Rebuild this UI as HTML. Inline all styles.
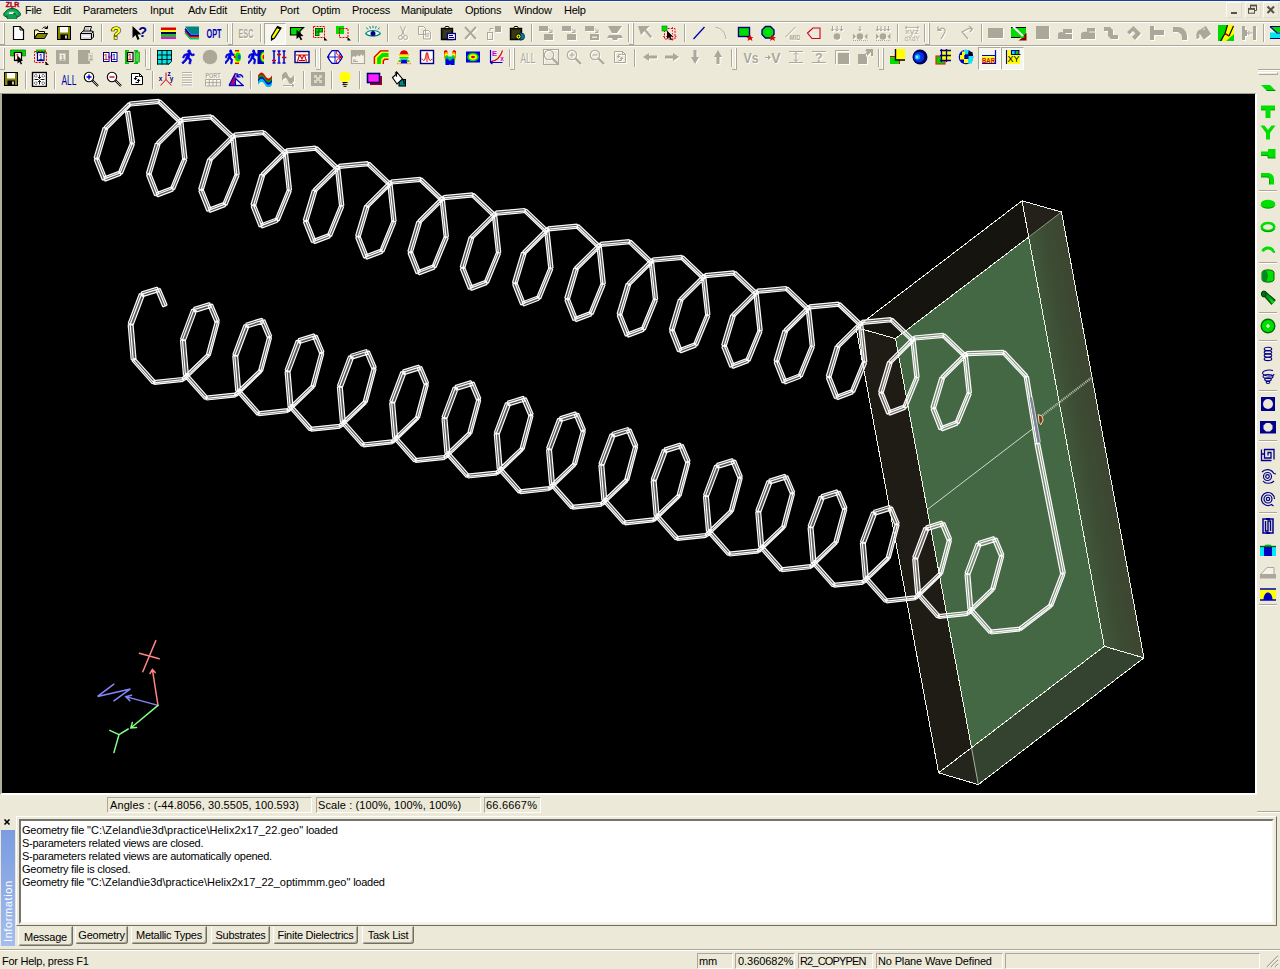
<!DOCTYPE html>
<html><head><meta charset="utf-8"><title>IE3D</title><style>
*{box-sizing:border-box;margin:0;padding:0}
html,body{width:1280px;height:969px;overflow:hidden;background:#ece9d8}
body{position:relative;font-family:"Liberation Sans",sans-serif;font-size:11px;color:#000}
.abs{position:absolute}
.topline{position:absolute;left:0;top:0;width:1280px;height:2px;background:#f7f6ee;border-top:1px solid #1d3f9a}
.mi{position:absolute;top:3px;height:14px;line-height:14px;font-size:11px;letter-spacing:-0.25px;white-space:nowrap}
.wb{position:absolute;top:2px;width:16px;height:16px;border:1px solid;border-color:#fbfaf3 #dedbca #dedbca #fbfaf3;background:#edeadb}
.wb svg{display:block;margin:-1px 0 0 -1px}
.ic{position:absolute;width:16px;height:16px;display:block}
.ic svg{display:block}
.sep{position:absolute;width:2px;height:18px;border-left:1px solid #aca899;border-right:1px solid #fff}
.hsep{position:absolute;width:18px;height:2px;border-top:1px solid #aca899;border-bottom:1px solid #fff}
.grip{position:absolute;width:2px;height:22px;border-left:1px solid #fff;border-right:1px solid #aca899}
.grip:after{content:"";position:absolute;left:-4px;top:21px;width:5px;height:1px;background:#aca899}
.pressed{position:absolute;border:1px solid;border-color:#aca899 #fff #fff #aca899;background:#f6f5ee}
.hl{position:absolute;left:0;width:1280px;height:2px;border-top:1px solid #aca899;border-bottom:1px solid #fff}
.vpwrap{position:absolute;left:0;top:93px;width:1257px;height:702px;border:2px solid;border-top-width:1px;border-color:#a5a292 #fff #fff #b2af9f;background:#000}
.vp{position:absolute;left:0;top:0;display:block}
.fld{position:absolute;top:797px;height:16px;line-height:14px;border:1px solid;border-color:#aca899 #fff #fff #aca899;padding-left:3px;white-space:nowrap;font-size:11px;letter-spacing:-0.1px}
.msgf{position:absolute;left:16px;top:816px;width:1261px;height:110px;border:1px solid;border-color:#fff #716f64 #716f64 #fff}
.msg{position:absolute;left:19px;top:819px;width:1255px;height:105px;border:2px solid;border-color:#77756a #f6f5ec #f6f5ec #77756a;background:#fff}
.msg div{position:absolute;left:1px;height:13px;line-height:13px;white-space:nowrap;font-size:11px;letter-spacing:-0.25px}
.msg div b{font-weight:normal;letter-spacing:0.1px}
.msg div i{font-style:normal;letter-spacing:0}
.info{position:absolute;left:1px;top:830px;width:14px;height:116px;background:linear-gradient(#7b9ce0,#a5bdee)}
.info span{position:absolute;left:0;top:116px;width:116px;height:14px;line-height:14px;transform-origin:0 0;transform:rotate(-90deg);color:#fff;font-size:11px;letter-spacing:0.6px;padding-left:4px}
.tab{position:absolute;top:926px;height:18px;line-height:16px;border:1px solid;border-color:transparent #716f64 #716f64 #fff;border-radius:0 0 3px 3px;text-align:center;font-size:11px;letter-spacing:-0.25px;white-space:nowrap;box-shadow:inset -1px -1px 0 #aca899}
.tab.sel{top:926px;height:20px;border-color:transparent #716f64 #716f64 #fff;line-height:20px;box-shadow:inset -1px -1px 0 #aca899;background:#ece9d8}
.sb{position:absolute;top:953px;height:16px;line-height:15px;border:1px solid;border-color:#aca899 #fff #fff #aca899;padding-left:1px;white-space:nowrap;font-size:11px;letter-spacing:-0.15px}
.sbt{position:absolute;left:2px;top:954px;line-height:14px;font-size:11px;letter-spacing:-0.25px}
</style></head><body>
<div class="topline"></div>
<span class="ic" style="left:3px;top:1px;width:18px;height:19px"><svg width="18" height="18" viewBox="0 0 18 18"><text x="9.5" y="6.2" font-size="7.5" fill="#b00018" font-family="Liberation Sans, sans-serif" font-weight="bold" text-anchor="middle" textLength="13.5" lengthAdjust="spacingAndGlyphs" stroke="#b00018" stroke-width=".4">ZLR</text><path d="M9 6v3" stroke="#7a2030" stroke-width="1.300"/><path d="M.8 12.500l3-3.300 3.500-1.700h4l3.500 1.700 2.700 3.300-.3 2-2.200 1.300-1-1 .2 2.200-1.500 1.400h-7.400l-1.500-1.400 .2-2.200-1 1-2.200-1.300z" fill="#10a050" stroke="#064a26" stroke-width=".9"/><path d="M4 13.500c0-4 10-4 10 0" fill="none" stroke="#30c070" stroke-width="1.200"/><path d="M6.300 11.300h4.500l.7 1.700h-5.900z" fill="#fff"/><path d="M10.300 12.300l2.200 1.200" stroke="#064a26" stroke-width="1.200"/></svg></span>
<span class="mi" style="left:25px">File</span><span class="mi" style="left:53px">Edit</span><span class="mi" style="left:83px">Parameters</span><span class="mi" style="left:150px">Input</span><span class="mi" style="left:188px">Adv Edit</span><span class="mi" style="left:240px">Entity</span><span class="mi" style="left:280px">Port</span><span class="mi" style="left:312px">Optim</span><span class="mi" style="left:352px">Process</span><span class="mi" style="left:401px">Manipulate</span><span class="mi" style="left:465px">Options</span><span class="mi" style="left:514px">Window</span><span class="mi" style="left:564px">Help</span>
<span class="wb" style="left:1226px"><svg width="16" height="16" viewBox="0 0 16 16"><rect x="5" y="10" width="6" height="2" fill="#55524a"/></svg></span>
<span class="wb" style="left:1245px"><svg width="16" height="16" viewBox="0 0 16 16"><path d="M5.500 4v4.500h1.500M11.500 4v4.500h-1.500" fill="none" stroke="#55524a"/><path d="M5 3.500h7" stroke="#55524a" stroke-width="1.800"/><rect x="3.500" y="7" width="6" height="4.200" fill="#edeadb" stroke="#55524a"/><path d="M3 6.800h7" stroke="#55524a" stroke-width="1.800"/></svg></span>
<span class="wb" style="left:1263px"><svg width="16" height="16" viewBox="0 0 16 16"><path d="M4.500 4.500l6.500 6.500M11 4.500l-6.500 6.500" stroke="#55524a" stroke-width="2"/></svg></span>
<div class="hl" style="top:21px"></div>
<div class="hl" style="top:45px"></div>
<span class="grip" style="left:3px;top:23px"></span>
<span class="ic" style="left:10px;top:25px"><svg width="16" height="16" viewBox="0 0 16 16"><path d="M3.500 1.500h6.500l3.500 3.500v9.500h-10z" fill="#fff" stroke="#000" stroke-width="1.200"/><path d="M10 1.500v3.500h3.500" fill="none" stroke="#000"/></svg></span>
<span class="ic" style="left:33px;top:25px"><svg width="16" height="16" viewBox="0 0 16 16"><path d="M1.500 13.500v-8.500h3.500l1 1.500h5.500v2.500h-7.500z" fill="#ffff9c" stroke="#000"/><path d="M1.500 13.500l3-5h10l-3 5z" fill="#848400" stroke="#000"/><path d="M9.500 3.500c1.500-2 3.500-2 4.500-.5M14.500 .8v2.700h-2.700" fill="none" stroke="#000"/></svg></span>
<span class="ic" style="left:56px;top:25px"><svg width="16" height="16" viewBox="0 0 16 16"><rect x="1.500" y="1.500" width="13" height="13" fill="#848400" stroke="#000"/><rect x="4" y="2" width="8" height="5.500" fill="#fff"/><rect x="4.500" y="9.500" width="7.500" height="5" fill="#000"/><rect x="9" y="10.500" width="2" height="3" fill="#c6c6c6"/></svg></span>
<span class="ic" style="left:79px;top:25px"><svg width="16" height="16" viewBox="0 0 16 16"><path d="M4.500 6.500l1.500-5h6.500l-1.500 5z" fill="#fff" stroke="#000"/><path d="M1.500 8.500l2.500-2.500h9.500l1 2.500v3.500l-2.500 2.500h-10.500z" fill="#d8d8d8" stroke="#000"/><path d="M1.500 8.500h11v6M12.500 8.500l2-2" fill="none" stroke="#000"/><path d="M6.500 3h4M6 4.800h4" stroke="#808080" stroke-width="0.8"/><rect x="3" y="10.500" width="8" height="1.500" fill="#fff"/></svg></span>
<span class="sep" style="left:101px;top:24px"></span>
<span class="ic" style="left:108px;top:25px"><svg width="16" height="16" viewBox="0 0 16 16"><text x="8" y="14" font-size="17" fill="#ffff00" font-family="Liberation Sans, sans-serif" font-weight="bold" text-anchor="middle" stroke="#000" stroke-width="1.1" paint-order="stroke">?</text></svg></span>
<span class="ic" style="left:131px;top:25px"><svg width="16" height="16" viewBox="0 0 16 16"><path d="M1.500 1v12l3-3 2 5 2-1-2-4.500h4z" fill="#000"/><text x="11.8" y="12" font-size="14.5" fill="#000090" font-family="Liberation Sans, sans-serif" font-weight="bold" text-anchor="middle">?</text></svg></span>
<span class="sep" style="left:153px;top:24px"></span>
<span class="ic" style="left:160px;top:25px"><svg width="16" height="16" viewBox="0 0 16 16"><rect x="1" y="2.500" width="15" height="2.500" fill="#e00000"/><rect x="1" y="5" width="15" height="2" fill="#ffff00"/><rect x="1" y="7" width="15" height="2.500" fill="#000060"/><rect x="1" y="9.500" width="15" height="2.500" fill="#00d000"/><rect x="1" y="12" width="15" height="2" fill="#ff00ff"/></svg></span>
<span class="ic" style="left:183px;top:25px"><svg width="16" height="16" viewBox="0 0 16 16"><path d="M1.500 8.500l5.500 6h9v-2h-8l-5.500-6z" fill="#00d060"/><path d="M1.500 6.500l5.500 6h9v-1.500h-8l-5.500-6z" fill="#e00000"/><path d="M1.500 4.500l5.500 6.500h9v-1.500h-8l-5.500-6.500z" fill="#0000d0"/><path d="M2 1.500h14v8h-8z" fill="#008484"/></svg></span>
<span class="ic" style="left:206px;top:25px"><svg width="16" height="16" viewBox="0 0 16 16"><text x="8" y="13" font-size="12.5" fill="#0000c0" font-family="Liberation Sans, sans-serif" font-weight="bold" text-anchor="middle" textLength="15" lengthAdjust="spacingAndGlyphs">OPT</text></svg></span>
<span class="sep" style="left:227px;top:24px"></span>
<span class="grip" style="left:231px;top:23px"></span>
<span class="ic" style="left:238px;top:25px"><svg width="16" height="16" viewBox="0 0 16 16"><g color="#fff" transform="translate(1 1)"><text x="8" y="13" font-size="12.5" fill="currentColor" font-family="Liberation Sans, sans-serif" font-weight="bold" text-anchor="middle" textLength="15" lengthAdjust="spacingAndGlyphs">ESC</text></g><g color="#aca899"><text x="8" y="13" font-size="12.5" fill="currentColor" font-family="Liberation Sans, sans-serif" font-weight="bold" text-anchor="middle" textLength="15" lengthAdjust="spacingAndGlyphs">ESC</text></g></svg></span>
<span class="sep" style="left:260px;top:24px"></span>
<span class="pressed" style="left:264px;top:23px;width:22px;height:22px"></span>
<span class="ic" style="left:267px;top:25px"><svg width="16" height="16" viewBox="0 0 16 16"><path d="M10.500 1.500l3.500 1.500-6.500 10-3 2 0-3.500z" fill="#ffff00" stroke="#000" stroke-width="1.200"/><path d="M4.500 15l0-2.500 2.200 1z" fill="#000"/><path d="M10.500 1.500l3.500 1.500-1 1.500-3.500-1.500z" fill="#000"/></svg></span>
<span class="ic" style="left:289px;top:25px"><svg width="16" height="16" viewBox="0 0 16 16"><path d="M1.500 2.500h13l-3.500 3.500v4h-9.500z" fill="#00e000" stroke="#000" stroke-width="1.200"/><path d="M7.500 4.500l7 6.500-3 .2 1.800 3.300-1.600 .8-1.700-3.400-2.500 2.100z" fill="#000"/></svg></span>
<span class="ic" style="left:312px;top:25px"><svg width="16" height="16" viewBox="0 0 16 16"><rect x="1.500" y="1.500" width="11" height="11" fill="none" stroke="#e00000" stroke-dasharray="2 1"/><rect x="3.500" y="3.500" width="7" height="7" fill="#00d800" stroke="#006000"/><path d="M3.500 7h7M7 3.500v7" stroke="#006000"/><rect x="7.500" y="7.500" width="3.500" height="3.500" fill="#ece9d8"/><path d="M12 12v3.500h3.500z" fill="#000"/></svg></span>
<span class="ic" style="left:335px;top:25px"><svg width="16" height="16" viewBox="0 0 16 16"><rect x="1" y="1" width="8" height="8" fill="#00e000"/><rect x="4.500" y="3.500" width="8.500" height="9" fill="none" stroke="#e00000" stroke-dasharray="2 1"/><path d="M12.500 12v3.500h3.500z" fill="#000"/></svg></span>
<span class="sep" style="left:358px;top:24px"></span>
<span class="ic" style="left:365px;top:25px"><svg width="16" height="16" viewBox="0 0 16 16"><path d="M.5 8.500c3.500-4 11.500-4 15 0c-3.500 3.500-11.500 3.500-15 0z" fill="#fff" stroke="#008484" stroke-width="1.100"/><circle cx="8" cy="8.500" r="2.500" fill="#000084"/><path d="M3 4.500l-1.500-2M5.500 3.500l-.7-2.300M8 3.200v-2.400M10.500 3.500l.7-2.300M13 4.500l1.500-2" stroke="#008484"/></svg></span>
<span class="sep" style="left:387px;top:24px"></span>
<span class="ic" style="left:395px;top:25px"><svg width="16" height="16" viewBox="0 0 16 16"><g color="#fff" transform="translate(1 1)"><path d="M5.500 1.500l4 9M10.500 1.500l-4 9" stroke="currentColor" fill="none"/><circle cx="5.500" cy="12.500" r="2" fill="none" stroke="currentColor"/><circle cx="10.500" cy="12.500" r="2" fill="none" stroke="currentColor"/></g><g color="#aca899"><path d="M5.500 1.500l4 9M10.500 1.500l-4 9" stroke="currentColor" fill="none"/><circle cx="5.500" cy="12.500" r="2" fill="none" stroke="currentColor"/><circle cx="10.500" cy="12.500" r="2" fill="none" stroke="currentColor"/></g></svg></span>
<span class="ic" style="left:417px;top:25px"><svg width="16" height="16" viewBox="0 0 16 16"><g color="#fff" transform="translate(1 1)"><path d="M1.500 1.500h5l2 2v6h-7zM6.500 5.500h5l2 2v6.500h-7z" fill="none" stroke="currentColor"/><path d="M8 9h4M8 11h4" stroke="currentColor"/></g><g color="#aca899"><path d="M1.500 1.500h5l2 2v6h-7zM6.500 5.500h5l2 2v6.500h-7z" fill="none" stroke="currentColor"/><path d="M8 9h4M8 11h4" stroke="currentColor"/></g></svg></span>
<span class="ic" style="left:440px;top:25px"><svg width="16" height="16" viewBox="0 0 16 16"><path d="M1.500 3.500h11v11h-11z" fill="#5a5a20" stroke="#000" stroke-width="1.400"/><path d="M2.500 4.500h9v9h-9z" fill="#000" /><path d="M3 5h8v8h-8z" fill="#8a8a3a" fill-opacity=".4"/><path d="M4.500 3.500l1-2h3l1 2z" fill="#ffff9c" stroke="#000"/><rect x="7.500" y="8.500" width="8" height="6" fill="#fff" stroke="#000084" stroke-width="1.300"/><path d="M9 10.500h4M9 12.500h5" stroke="#000084"/></svg></span>
<span class="ic" style="left:463px;top:25px"><svg width="16" height="16" viewBox="0 0 16 16"><g color="#fff" transform="translate(1 1)"><path d="M2 2l11 12M13 2l-11 12" stroke="currentColor" stroke-width="2" fill="none"/></g><g color="#aca899"><path d="M2 2l11 12M13 2l-11 12" stroke="currentColor" stroke-width="2" fill="none"/></g></svg></span>
<span class="ic" style="left:486px;top:25px"><svg width="16" height="16" viewBox="0 0 16 16"><g color="#fff" transform="translate(1 1)"><rect x="1.500" y="7.500" width="5" height="7" fill="none" stroke="currentColor"/><rect x="9" y="1" width="6" height="6" fill="currentColor"/><path d="M4 6v-2.500h3.500" stroke="currentColor" fill="none"/></g><g color="#aca899"><rect x="1.500" y="7.500" width="5" height="7" fill="none" stroke="currentColor"/><rect x="9" y="1" width="6" height="6" fill="currentColor"/><path d="M4 6v-2.500h3.500" stroke="currentColor" fill="none"/></g></svg></span>
<span class="ic" style="left:509px;top:25px"><svg width="16" height="16" viewBox="0 0 16 16"><path d="M1.500 3.500h11v11h-11z" fill="#5a5a20" stroke="#000" stroke-width="1.400"/><path d="M2.500 4.500h9v9h-9z" fill="#000" /><path d="M3 5h8v8h-8z" fill="#8a8a3a" fill-opacity=".4"/><path d="M4.500 3.500l1-2h3l1 2z" fill="#ffff9c" stroke="#000"/><circle cx="12" cy="11.500" r="3.500" fill="#0084a8" stroke="#003060"/><circle cx="9.500" cy="11.500" r="2.600" fill="#ffff00" stroke="#000"/><circle cx="9.500" cy="11.500" r=".9" fill="#000"/></svg></span>
<span class="sep" style="left:531px;top:24px"></span>
<span class="ic" style="left:538px;top:25px"><svg width="16" height="16" viewBox="0 0 16 16"><g color="#fff" transform="translate(1 1)"><rect x="1" y="1" width="9" height="5" fill="currentColor"/><rect x="6" y="9" width="9" height="6" fill="currentColor"/><path d="M10.500 3.500l3.500 4M14 4.500v3h-3" stroke="currentColor" fill="none"/></g><g color="#aca899"><rect x="1" y="1" width="9" height="5" fill="currentColor"/><rect x="6" y="9" width="9" height="6" fill="currentColor"/><path d="M10.500 3.500l3.500 4M14 4.500v3h-3" stroke="currentColor" fill="none"/></g></svg></span>
<span class="ic" style="left:561px;top:25px"><svg width="16" height="16" viewBox="0 0 16 16"><g color="#fff" transform="translate(1 1)"><rect x="1" y="1" width="9" height="5" fill="currentColor"/><rect x="6" y="9" width="9" height="6" fill="currentColor"/><path d="M10.500 3.500l3.500 4M14 4.500v3h-3" stroke="currentColor" fill="none"/></g><g color="#aca899"><rect x="1" y="1" width="9" height="5" fill="currentColor"/><rect x="6" y="9" width="9" height="6" fill="currentColor"/><path d="M10.500 3.500l3.500 4M14 4.500v3h-3" stroke="currentColor" fill="none"/></g></svg></span>
<span class="ic" style="left:584px;top:25px"><svg width="16" height="16" viewBox="0 0 16 16"><g color="#fff" transform="translate(1 1)"><rect x="1" y="1" width="9" height="5" fill="currentColor"/><rect x="6" y="9" width="9" height="6" fill="currentColor"/><path d="M10.500 3.500l3.500 4M14 4.500v3h-3" stroke="currentColor" fill="none"/><rect x="8" y="11.500" width="5" height="1.500" fill="#ece9d8"/></g><g color="#aca899"><rect x="1" y="1" width="9" height="5" fill="currentColor"/><rect x="6" y="9" width="9" height="6" fill="currentColor"/><path d="M10.500 3.500l3.500 4M14 4.500v3h-3" stroke="currentColor" fill="none"/><rect x="8" y="11.500" width="5" height="1.500" fill="#ece9d8"/></g></svg></span>
<span class="ic" style="left:607px;top:25px"><svg width="16" height="16" viewBox="0 0 16 16"><g color="#fff" transform="translate(1 1)"><path d="M1 1h14l-5 7h-5zM2 10h12l2 3h-5l-1 2h-4l-1-2h-5z" fill="currentColor"/></g><g color="#aca899"><path d="M1 1h14l-5 7h-5zM2 10h12l2 3h-5l-1 2h-4l-1-2h-5z" fill="currentColor"/></g></svg></span>
<span class="sep" style="left:628px;top:24px"></span>
<span class="grip" style="left:632px;top:23px"></span>
<span class="ic" style="left:637px;top:25px"><svg width="16" height="16" viewBox="0 0 16 16"><g color="#fff" transform="translate(1 1)"><path d="M1 1h12l-4 3.500 6 7-1.500 1.500-6-7-3.500 4z" fill="currentColor"/></g><g color="#aca899"><path d="M1 1h12l-4 3.500 6 7-1.500 1.500-6-7-3.500 4z" fill="currentColor"/></g></svg></span>
<span class="ic" style="left:661px;top:25px"><svg width="16" height="16" viewBox="0 0 16 16"><rect x="3.500" y="3.500" width="10.500" height="10.500" fill="#fbe4dc" stroke="#e00000" stroke-dasharray="2 1.200"/><path d="M11.500 2v13.500M2 11.500h13.500" stroke="#e00000" stroke-dasharray="1.500 1.500" stroke-width=".8"/><rect x="1" y="1" width="5" height="5" fill="#00e000" stroke="#008000" stroke-width=".6"/><path d="M6 5.500l6 6-2.500 .2 1.500 3-1.300 .6-1.500-3-2.200 1.800z" fill="#000"/></svg></span>
<span class="sep" style="left:684px;top:24px"></span>
<span class="ic" style="left:691px;top:25px"><svg width="16" height="16" viewBox="0 0 16 16"><path d="M2.500 14l11-12" stroke="#0000b0" stroke-width="1.300"/></svg></span>
<span class="ic" style="left:713px;top:25px"><svg width="16" height="16" viewBox="0 0 16 16"><g color="#fff" transform="translate(1 1)"><path d="M2.500 2.500c6 .5 10 5 10.500 11.500" stroke="currentColor" fill="none"/></g><g color="#aca899"><path d="M2.500 2.500c6 .5 10 5 10.500 11.500" stroke="currentColor" fill="none"/></g></svg></span>
<span class="ic" style="left:737px;top:25px"><svg width="16" height="16" viewBox="0 0 16 16"><rect x="1.500" y="2.500" width="11" height="9" fill="#00e000" stroke="#000084" stroke-width="1.400"/><path d="M13 9.5l1.200 2.400h2.300l-1.800 1.700 .7 2.400-2.400-1.500-2.400 1.500 .7-2.400-1.800-1.700h2.300z" fill="#e00000"/></svg></span>
<span class="ic" style="left:760px;top:25px"><svg width="16" height="16" viewBox="0 0 16 16"><path d="M5.500 1.500h5l3.500 3.500v4.500l-3.500 3.500h-5l-3.500-3.500v-4.500z" fill="#00e000" stroke="#000084" stroke-width="1.400"/><path d="M12.5 9.5l1.200 2.400h2.300l-1.800 1.700 .7 2.400-2.400-1.500-2.400 1.500 .7-2.400-1.800-1.700h2.300z" fill="#e00000"/></svg></span>
<span class="ic" style="left:784px;top:25px"><svg width="16" height="16" viewBox="0 0 16 16"><g color="#fff" transform="translate(1 1)"><path d="M1.500 12l10-10" stroke="currentColor"/><text x="11" y="15" font-size="7" fill="currentColor" font-family="Liberation Sans, sans-serif" text-anchor="middle" font-weight="bold" textLength="11" lengthAdjust="spacingAndGlyphs">MID</text></g><g color="#aca899"><path d="M1.500 12l10-10" stroke="currentColor"/><text x="11" y="15" font-size="7" fill="currentColor" font-family="Liberation Sans, sans-serif" text-anchor="middle" font-weight="bold" textLength="11" lengthAdjust="spacingAndGlyphs">MID</text></g></svg></span>
<span class="ic" style="left:806px;top:25px"><svg width="16" height="16" viewBox="0 0 16 16"><path d="M1.500 8l5.500-5h7v10.500h-8z" fill="none" stroke="#d00020" stroke-width="1.100"/></svg></span>
<span class="ic" style="left:829px;top:25px"><svg width="16" height="16" viewBox="0 0 16 16"><g color="#fff" transform="translate(1 1)"><path d="M3.5 1v5M3.5 6l-1.500-2M3.5 6l1.500-2" stroke="currentColor" fill="none"/><path d="M8 1v5M8 6l-1.500-2M8 6l1.500-2" stroke="currentColor" fill="none"/><path d="M12.5 1v5M12.5 6l-1.500-2M12.5 6l1.500-2" stroke="currentColor" fill="none"/><circle cx="8" cy="11.500" r="3.300" fill="currentColor"/></g><g color="#aca899"><path d="M3.5 1v5M3.5 6l-1.500-2M3.5 6l1.500-2" stroke="currentColor" fill="none"/><path d="M8 1v5M8 6l-1.500-2M8 6l1.500-2" stroke="currentColor" fill="none"/><path d="M12.5 1v5M12.5 6l-1.500-2M12.5 6l1.500-2" stroke="currentColor" fill="none"/><circle cx="8" cy="11.500" r="3.300" fill="currentColor"/></g></svg></span>
<span class="ic" style="left:852px;top:25px"><svg width="16" height="16" viewBox="0 0 16 16"><g color="#fff" transform="translate(1 1)"><path d="M8 1v5M8 6l-1.500-2M8 6l1.500-2" stroke="currentColor" fill="none"/><circle cx="8" cy="11.500" r="3.300" fill="currentColor"/><path d="M1 8.500l3 3-3 3zM15.500 8.500l-3 3 3 3z" fill="currentColor"/><path d="M1 15.500h14.500" stroke="currentColor" stroke-dasharray="1 1"/></g><g color="#aca899"><path d="M8 1v5M8 6l-1.500-2M8 6l1.500-2" stroke="currentColor" fill="none"/><circle cx="8" cy="11.500" r="3.300" fill="currentColor"/><path d="M1 8.500l3 3-3 3zM15.500 8.500l-3 3 3 3z" fill="currentColor"/><path d="M1 15.500h14.500" stroke="currentColor" stroke-dasharray="1 1"/></g></svg></span>
<span class="ic" style="left:875px;top:25px"><svg width="16" height="16" viewBox="0 0 16 16"><g color="#fff" transform="translate(1 1)"><path d="M2.5 1v5M2.5 6l-1.500-2M2.5 6l1.500-2" stroke="currentColor" fill="none"/><path d="M6 1v5M6 6l-1.500-2M6 6l1.500-2" stroke="currentColor" fill="none"/><path d="M10 1v5M10 6l-1.500-2M10 6l1.500-2" stroke="currentColor" fill="none"/><path d="M13.5 1v5M13.5 6l-1.500-2M13.5 6l1.500-2" stroke="currentColor" fill="none"/><circle cx="8" cy="11.500" r="3.300" fill="currentColor"/><path d="M1 8.500l3 3-3 3zM15.500 8.500l-3 3 3 3z" fill="currentColor"/><path d="M1 15.500h14.500" stroke="currentColor" stroke-dasharray="1 1"/></g><g color="#aca899"><path d="M2.5 1v5M2.5 6l-1.500-2M2.5 6l1.500-2" stroke="currentColor" fill="none"/><path d="M6 1v5M6 6l-1.500-2M6 6l1.500-2" stroke="currentColor" fill="none"/><path d="M10 1v5M10 6l-1.500-2M10 6l1.500-2" stroke="currentColor" fill="none"/><path d="M13.5 1v5M13.5 6l-1.500-2M13.5 6l1.500-2" stroke="currentColor" fill="none"/><circle cx="8" cy="11.500" r="3.300" fill="currentColor"/><path d="M1 8.500l3 3-3 3zM15.500 8.500l-3 3 3 3z" fill="currentColor"/><path d="M1 15.500h14.500" stroke="currentColor" stroke-dasharray="1 1"/></g></svg></span>
<span class="sep" style="left:897px;top:24px"></span>
<span class="ic" style="left:904px;top:25px"><svg width="16" height="16" viewBox="0 0 16 16"><g color="#fff" transform="translate(1 1)"><path d="M1 2.500h14M1 2.500l2-1.500M1 2.500l2 1.500M15 2.500l-2-1.500M15 2.500l-2 1.500" stroke="currentColor" fill="none" stroke-width=".8"/><text x="8" y="9" font-size="8" fill="currentColor" font-family="Liberation Sans, sans-serif" text-anchor="middle" textLength="14" lengthAdjust="spacingAndGlyphs">xyz</text><text x="8" y="15.5" font-size="7.5" fill="currentColor" font-family="Liberation Sans, sans-serif" text-anchor="middle" textLength="15" lengthAdjust="spacingAndGlyphs">dXdY</text></g><g color="#aca899"><path d="M1 2.500h14M1 2.500l2-1.500M1 2.500l2 1.500M15 2.500l-2-1.500M15 2.500l-2 1.500" stroke="currentColor" fill="none" stroke-width=".8"/><text x="8" y="9" font-size="8" fill="currentColor" font-family="Liberation Sans, sans-serif" text-anchor="middle" textLength="14" lengthAdjust="spacingAndGlyphs">xyz</text><text x="8" y="15.5" font-size="7.5" fill="currentColor" font-family="Liberation Sans, sans-serif" text-anchor="middle" textLength="15" lengthAdjust="spacingAndGlyphs">dXdY</text></g></svg></span>
<span class="sep" style="left:924px;top:24px"></span>
<span class="grip" style="left:928px;top:23px"></span>
<span class="ic" style="left:935px;top:25px"><svg width="16" height="16" viewBox="0 0 16 16"><g color="#fff" transform="translate(1 1)"><path d="M6 14l4-7c1-2.500-1.500-4.500-4-3.500l-3 1.500M3 1.500v3.800h3.800" stroke="currentColor" fill="none" stroke-width="1.200"/></g><g color="#aca899"><path d="M6 14l4-7c1-2.500-1.500-4.500-4-3.500l-3 1.500M3 1.500v3.800h3.800" stroke="currentColor" fill="none" stroke-width="1.200"/></g></svg></span>
<span class="ic" style="left:959px;top:25px"><svg width="16" height="16" viewBox="0 0 16 16"><g color="#fff" transform="translate(1 1)"><path d="M9 14l-6-7 6.500-3.500 4 .5M10 1l3.500 3-2.500 3" stroke="currentColor" fill="none" stroke-width="1.200"/></g><g color="#aca899"><path d="M9 14l-6-7 6.500-3.500 4 .5M10 1l3.500 3-2.500 3" stroke="currentColor" fill="none" stroke-width="1.200"/></g></svg></span>
<span class="sep" style="left:981px;top:24px"></span>
<span class="ic" style="left:988px;top:25px"><svg width="16" height="16" viewBox="0 0 16 16"><g color="#fff" transform="translate(1 1)"><rect x="0" y="3" width="15" height="10" fill="currentColor"/></g><g color="#aca899"><rect x="0" y="3" width="15" height="10" fill="currentColor"/></g></svg></span>
<span class="ic" style="left:1011px;top:25px"><svg width="16" height="16" viewBox="0 0 16 16"><rect x="0" y="2" width="15" height="11" fill="#00d800"/><path d="M0 2.500h15M0 12.500h9" stroke="#000" stroke-width="1.200"/><path d="M2 1.500l10 9.500" stroke="#fff" stroke-width="2"/><path d="M15.500 8v7.500h-8l3.500-2.500 2.500-.5-.5-2.500z" fill="#840000"/></svg></span>
<span class="ic" style="left:1035px;top:25px"><svg width="16" height="16" viewBox="0 0 16 16"><g color="#fff" transform="translate(1 1)"><rect x="1" y="1" width="13" height="13" fill="currentColor"/></g><g color="#aca899"><rect x="1" y="1" width="13" height="13" fill="currentColor"/></g></svg></span>
<span class="ic" style="left:1057px;top:25px"><svg width="16" height="16" viewBox="0 0 16 16"><g color="#fff" transform="translate(1 1)"><path d="M6 4h9v4h-6l-1 1h7v5h-14v-4.500c0-2 2-3 5-2z" fill="currentColor"/></g><g color="#aca899"><path d="M6 4h9v4h-6l-1 1h7v5h-14v-4.500c0-2 2-3 5-2z" fill="currentColor"/></g></svg></span>
<span class="ic" style="left:1080px;top:25px"><svg width="16" height="16" viewBox="0 0 16 16"><g color="#fff" transform="translate(1 1)"><path d="M7 3h8v11h-14v-4.500c0-2 2-3 6-2.500z" fill="currentColor"/><rect x="9" y="6.500" width="6" height="1" fill="#ece9d8"/></g><g color="#aca899"><path d="M7 3h8v11h-14v-4.500c0-2 2-3 6-2.500z" fill="currentColor"/><rect x="9" y="6.500" width="6" height="1" fill="#ece9d8"/></g></svg></span>
<span class="ic" style="left:1103px;top:25px"><svg width="16" height="16" viewBox="0 0 16 16"><g color="#fff" transform="translate(1 1)"><path d="M1 2h6l3 3v5h5v4h-7l-3-3v-5h-4z" fill="currentColor"/></g><g color="#aca899"><path d="M1 2h6l3 3v5h5v4h-7l-3-3v-5h-4z" fill="currentColor"/></g></svg></span>
<span class="ic" style="left:1126px;top:25px"><svg width="16" height="16" viewBox="0 0 16 16"><g color="#fff" transform="translate(1 1)"><path d="M1 7l6.500-6 7.500 7.500-6 6.500-3-3 3.500-3.500-2.500-2.500-3.500 3.500z" fill="currentColor"/></g><g color="#aca899"><path d="M1 7l6.500-6 7.500 7.500-6 6.500-3-3 3.500-3.500-2.500-2.500-3.500 3.500z" fill="currentColor"/></g></svg></span>
<span class="ic" style="left:1149px;top:25px"><svg width="16" height="16" viewBox="0 0 16 16"><g color="#fff" transform="translate(1 1)"><path d="M1 1h4v4h10v5h-10v5h-4z" fill="currentColor"/></g><g color="#aca899"><path d="M1 1h4v4h10v5h-10v5h-4z" fill="currentColor"/></g></svg></span>
<span class="ic" style="left:1172px;top:25px"><svg width="16" height="16" viewBox="0 0 16 16"><g color="#fff" transform="translate(1 1)"><path d="M1 2h5c5 0 9 4 9 9v4h-5v-3c0-3-3-5-6-5h-3z" fill="currentColor"/></g><g color="#aca899"><path d="M1 2h5c5 0 9 4 9 9v4h-5v-3c0-3-3-5-6-5h-3z" fill="currentColor"/></g></svg></span>
<span class="ic" style="left:1195px;top:25px"><svg width="16" height="16" viewBox="0 0 16 16"><g color="#fff" transform="translate(1 1)"><path d="M6 4l5-3 5 8-7 5.500-4.500-6z" fill="currentColor"/><path d="M5.500 4.500c-3 .5-4.500 3-4 9.500l3-1c-.5-3 0-5 2-6z" fill="currentColor"/><path d="M8 5l2-1.500" stroke="#ece9d8"/></g><g color="#aca899"><path d="M6 4l5-3 5 8-7 5.500-4.500-6z" fill="currentColor"/><path d="M5.500 4.500c-3 .5-4.500 3-4 9.500l3-1c-.5-3 0-5 2-6z" fill="currentColor"/><path d="M8 5l2-1.500" stroke="#ece9d8"/></g></svg></span>
<span class="ic" style="left:1218px;top:25px"><svg width="16" height="16" viewBox="0 0 16 16"><rect x="0" y="0" width="16" height="16" fill="#00d800"/><path d="M9.500 0h6.500v9l-8 7h-4z" fill="#ffff00"/><path d="M9.500 0l-2.500 8.500 4 2.500M7 8.500l-4.500 7.500M11 11l4.500-10" stroke="#000" fill="none" stroke-width="1.200"/><path d="M7 8.500l4 2.500" stroke="#e00000" stroke-width="1.300"/></svg></span>
<span class="ic" style="left:1241px;top:25px"><svg width="16" height="16" viewBox="0 0 16 16"><g color="#fff" transform="translate(1 1)"><path d="M1 1h3v4h2v6h-2v4h-3zM15 1h-3v14h3z" fill="currentColor"/><path d="M6.500 8h5M8.500 6l-2 2 2 2" stroke="currentColor" fill="none"/></g><g color="#aca899"><path d="M1 1h3v4h2v6h-2v4h-3zM15 1h-3v14h3z" fill="currentColor"/><path d="M6.500 8h5M8.500 6l-2 2 2 2" stroke="currentColor" fill="none"/></g></svg></span>
<span class="sep" style="left:1263px;top:24px"></span>
<span class="ic" style="left:1269px;top:25px"><svg width="16" height="16" viewBox="0 0 16 16"><path d="M1 1h15v6h-10z" fill="#00d800"/><path d="M1 7.500h15v6h-15z" fill="#00e8e8"/><path d="M1 1.500h15M1 1.500l7 6.500h8M1 13.500h15" stroke="#000084" fill="none" stroke-width="1.200"/></svg></span>
<span class="grip" style="left:3px;top:48px"></span>
<span class="ic" style="left:10px;top:49px"><svg width="16" height="16" viewBox="0 0 16 16"><path d="M.5 1h15v6h-3v-3h-9v3h-3z" fill="#00d800" stroke="#006000" stroke-width=".6"/><rect x="4.500" y="3.500" width="7" height="8" fill="#fff" stroke="#000" stroke-width="1.200"/><text x="7.5" y="10.5" font-size="9" fill="#d00020" font-family="Liberation Sans, sans-serif" text-anchor="middle">1</text><path d="M7.5 6.5l5.500 5.500-2.300 .1 1.400 2.700-1.300 .6-1.400-2.700-1.900 1.700z" fill="#000"/></svg></span>
<span class="ic" style="left:33px;top:49px"><svg width="16" height="16" viewBox="0 0 16 16"><rect x="3" y=".5" width="10" height="4" fill="#00d800"/><rect x="1.500" y="2.500" width="12" height="11" fill="none" stroke="#e00000" stroke-dasharray="2 1.200"/><rect x="4.500" y="3.500" width="6.500" height="8" fill="#fff" stroke="#000084" stroke-width="1.200"/><text x="7.8" y="10.5" font-size="9" fill="#0000c0" font-family="Liberation Sans, sans-serif" text-anchor="middle">1</text><path d="M12.500 12.500v3.500h3.500z" fill="#000"/></svg></span>
<span class="ic" style="left:55px;top:49px"><svg width="16" height="16" viewBox="0 0 16 16"><rect x="1" y="1" width="13" height="14" fill="#aca899"/><rect x="4.500" y="4.500" width="6" height="7" fill="#f4f2e8" stroke="#c8c5b4"/><text x="7.5" y="10.5" font-size="8" fill="#aca899" font-family="Liberation Sans, sans-serif" font-weight="bold" text-anchor="middle">1</text></svg></span>
<span class="ic" style="left:78px;top:49px"><svg width="16" height="16" viewBox="0 0 16 16"><rect x="0" y="1" width="12" height="14" fill="#aca899"/><rect x="10.500" y="4.500" width="4" height="7" fill="#f4f2e8" stroke="#d4d1c0"/><text x="12.7" y="10.5" font-size="8" fill="#aca899" font-family="Liberation Sans, sans-serif" font-weight="bold" text-anchor="middle">1</text></svg></span>
<span class="ic" style="left:102px;top:49px"><svg width="16" height="16" viewBox="0 0 16 16"><rect x="1.500" y="3.500" width="5.500" height="9" fill="#fff" stroke="#000084" stroke-width="1"/><rect x="9.500" y="3.500" width="5.500" height="9" fill="#fff" stroke="#000084" stroke-width="1"/><text x="4" y="11.3" font-size="9.5" fill="#d00020" font-family="Liberation Sans, sans-serif" text-anchor="middle">1</text><text x="12" y="11.3" font-size="9.5" fill="#0000c0" font-family="Liberation Sans, sans-serif" text-anchor="middle">1</text><path d="M6.500 8h4M8 6.500l-1.500 1.500 1.500 1.500" stroke="#a000a0" fill="none"/></svg></span>
<span class="ic" style="left:124px;top:49px"><svg width="16" height="16" viewBox="0 0 16 16"><path d="M1 1h4v1.500h-2v11h2v1.500h-4zM14 1h-4v1.500h2v11h-2v1.500h4z" fill="#00c000"/><rect x="11" y="3" width="4.500" height="10" fill="#40e040" stroke="#008000" stroke-width=".6"/><rect x="3.500" y="3.500" width="5.500" height="9" fill="#fff" stroke="#000" stroke-width="1.200"/><text x="6" y="11.3" font-size="9.5" fill="#d00020" font-family="Liberation Sans, sans-serif" text-anchor="middle">1</text></svg></span>
<span class="sep" style="left:145px;top:49px"></span>
<span class="grip" style="left:149px;top:48px"></span>
<span class="ic" style="left:156px;top:49px"><svg width="16" height="16" viewBox="0 0 16 16"><path d="M1 1h15v11l-3 3.500h-12z" fill="#00e8e8"/><path d="M1 1.500h15M1 6h15M1 10.500h15M1 15h12M1.500 1v14.500M6 1v14.500M11 1v14.500M15.500 1v11.500l-3 3" stroke="#000" fill="none" stroke-width=".9"/></svg></span>
<span class="ic" style="left:179px;top:49px"><svg width="16" height="16" viewBox="0 0 16 16"><circle cx="10" cy="2.300" r="1.700" fill="#0000e0"/><path d="M9.5 4l-4.500 1.500-1.500 3 1.300 .6 1.200-2.400 1.800-.5-1.600 4-3.400 3.500 1.300 1.200 3.700-3.800 .8-1.600 2 1.700-.8 3.400 1.700 .4 .9-4.200-2.300-2.500 1.200-3 1.500 1.700 2.600-.8-.4-1.400-1.700 .5-1.800-2.200z" fill="#0000e0" stroke="#0000e0" stroke-width=".7" stroke-linejoin="round"/></svg></span>
<span class="ic" style="left:202px;top:49px"><svg width="16" height="16" viewBox="0 0 16 16"><circle cx="8" cy="8" r="7.300" fill="#aca899"/></svg></span>
<span class="ic" style="left:225px;top:49px"><svg width="16" height="16" viewBox="0 0 16 16"><g transform="translate(-2 0) scale(.85 1)"><circle cx="9" cy="2.300" r="1.700" fill="#0000e0"/><path d="M8.5 4l-4.500 1.500-1.500 3 1.300 .6 1.200-2.400 1.800-.5-1.600 4-3.400 3.500 1.300 1.200 3.700-3.800 .8-1.600 2 1.700-.8 3.400 1.700 .4 .9-4.200-2.300-2.500 1.200-3 1.500 1.700 2.600-.8-.4-1.400-1.700 .5-1.800-2.200z" fill="#0000e0" stroke="#0000e0" stroke-width=".7" stroke-linejoin="round"/></g><rect x="9.500" y="1.500" width="5.500" height="13" fill="#ffff00"/><rect x="10" y="1" width="4" height="1.500" fill="#e00000"/><rect x="10" y="13.500" width="4" height="1.500" fill="#e00000"/><ellipse cx="13" cy="8" rx="3" ry="4.500" fill="#00e000"/><ellipse cx="14" cy="8" rx="1.500" ry="2.500" fill="#0060e0"/><rect x="9" y="7" width="1.500" height="2" fill="#e00000"/></svg></span>
<span class="ic" style="left:248px;top:49px"><svg width="16" height="16" viewBox="0 0 16 16"><g transform="translate(-2 0) scale(.85 1)"><circle cx="9" cy="2.300" r="1.700" fill="#0000e0"/><path d="M8.5 4l-4.500 1.500-1.500 3 1.300 .6 1.200-2.400 1.800-.5-1.600 4-3.400 3.500 1.300 1.200 3.700-3.800 .8-1.600 2 1.700-.8 3.400 1.700 .4 .9-4.200-2.300-2.500 1.200-3 1.500 1.700 2.600-.8-.4-1.400-1.700 .5-1.800-2.200z" fill="#0000e0" stroke="#0000e0" stroke-width=".7" stroke-linejoin="round"/></g><rect x="9.500" y="1" width="6.500" height="14" fill="#0000c0"/><path d="M16 2.500c-5 0-5 11 0 11z" fill="#00e000"/><path d="M16 4c-3.500 0-3.500 8 0 8z" fill="#ffff00"/><path d="M16 5.500c-2 0-2 5 0 5z" fill="#e00000"/></svg></span>
<span class="ic" style="left:271px;top:49px"><svg width="16" height="16" viewBox="0 0 16 16"><path d="M3 2v12M1.5 2h3M1.5 14h3" stroke="#0000d0" stroke-width="1.500" fill="none"/><path d="M8 2v12M6.5 2h3M6.5 14h3" stroke="#0000d0" stroke-width="1.500" fill="none"/><path d="M13 2v12M11.5 2h3M11.5 14h3" stroke="#0000d0" stroke-width="1.500" fill="none"/><path d="M1 11.500h4M6 5.500h4M11 8.500h4.500" stroke="#e00000" stroke-width="1.300"/></svg></span>
<span class="ic" style="left:294px;top:49px"><svg width="16" height="16" viewBox="0 0 16 16"><rect x="1" y="2.500" width="14" height="11" fill="#fff" stroke="#000084" stroke-width="1.400"/><path d="M2 6h12M5.500 6l-2 6.500M10.500 6l2 6.500M6 6l2 4 2-4M5 11.500h6" stroke="#d00000" fill="none" stroke-width="1.100"/></svg></span>
<span class="sep" style="left:315px;top:49px"></span>
<span class="grip" style="left:319px;top:48px"></span>
<span class="ic" style="left:327px;top:49px"><svg width="16" height="16" viewBox="0 0 16 16"><path d="M5 1.500h6l4.500 6.500-4.500 6.500h-6l-4.500-6.500z" fill="#fff" stroke="#0000c0" stroke-width="1.100"/><ellipse cx="8" cy="8" rx="6.500" ry="6.500" fill="none" stroke="#0000c0"/><path d="M.5 8h15M8 1.500v13" stroke="#0000c0" stroke-width=".9"/><path d="M15 8c-4-.5-6-3-5.500-6M15 8c-4 .5-6 3-5.500 6M15 8c-2-.3-3-1.500-2.800-3M15 8c-2 .3-3 1.500-2.800 3" stroke="#e00000" fill="none" stroke-width=".9"/></svg></span>
<span class="ic" style="left:350px;top:49px"><svg width="16" height="16" viewBox="0 0 16 16"><path d="M1.500 1.500h13v13h-13z" fill="#f4f2e8" stroke="#aca899" stroke-width="1.200"/><path d="M1.500 1.500h13v4l-2 1.500-1-2-2 2.500-2-1.500-2 2-2-1-2 2z" fill="#aca899"/><path d="M3 11h3M3 12.500h5" stroke="#aca899"/></svg></span>
<span class="ic" style="left:373px;top:49px"><svg width="16" height="16" viewBox="0 0 16 16"><path d="M1.500 15v-7l6-6h8" stroke="#e00000" stroke-width="1.600" fill="none"/><path d="M3.200 15v-6.300l5-5h7.300" stroke="#ffff00" stroke-width="1.800" fill="none"/><path d="M6 15v-5.200l3.800-3.800h5.700" stroke="#00e000" stroke-width="3.800" fill="none"/><path d="M8.800 15v-4l2.300-2.300h4.400" stroke="#ffff00" stroke-width="1.600" fill="none"/><path d="M10.300 15v-3.200l1.500-1.500h3.700" stroke="#e00000" stroke-width="1.400" fill="none"/></svg></span>
<span class="ic" style="left:396px;top:49px"><svg width="16" height="16" viewBox="0 0 16 16"><path d="M4 5c0-5 8-5 8 0z" fill="#e00000"/><rect x="3" y="5" width="10" height="1.500" fill="#ffa000"/><rect x="3" y="6.500" width="10" height="1.500" fill="#ffff00"/><rect x="3.500" y="8" width="9" height="1.500" fill="#00e000"/><rect x="4.500" y="9.500" width="7" height="1.500" fill="#00c0c0"/><rect x="5" y="11" width="6" height="3.500" fill="#0000e0"/><path d="M2.500 12h3M10.500 12h3" stroke="#00c000" stroke-width="1.500"/><path d="M1 14.500h4M11 14.500h4" stroke="#ffa000" stroke-width="1.400" stroke-dasharray="1.500 1"/></svg></span>
<span class="ic" style="left:419px;top:49px"><svg width="16" height="16" viewBox="0 0 16 16"><rect x="1.500" y="1.500" width="13" height="13" fill="#fff" stroke="#000084" stroke-width="1.400"/><path d="M2.500 10c2 0 2 3.500 3.500 0c1-3 1-6.500 2-6.500s1 3.500 2 6.500c1.500 3.500 1.500 0 3.500 0M8 4v9" stroke="#e00000" fill="none"/></svg></span>
<span class="ic" style="left:442px;top:49px"><svg width="16" height="16" viewBox="0 0 16 16"><path d="M2.0 2.7c0-2 3.500-2 3.500 0v6.500h-3.500zM10.5 2.7c0-2 3.500-2 3.500 0v6.500h-3.500z" fill="#e00000"/><path d="M2.35 4.4c0-2 3.500-2 3.500 0v6.500h-3.500zM10.15 4.4c0-2 3.500-2 3.500 0v6.500h-3.500z" fill="#ffa000"/><path d="M2.7 6.1000000000000005c0-2 3.500-2 3.500 0v6.500h-3.500zM9.8 6.1000000000000005c0-2 3.500-2 3.500 0v6.500h-3.500z" fill="#ffff00"/><path d="M3.05 7.8c0-2 3.500-2 3.500 0v6.500h-3.500zM9.45 7.8c0-2 3.500-2 3.500 0v6.500h-3.500z" fill="#00e000"/><path d="M3.4 9.5c0-2 3.500-2 3.500 0v6.500h-3.500zM9.1 9.5c0-2 3.500-2 3.500 0v6.500h-3.500z" fill="#00a0c0"/><path d="M3.75 11.2c0-2 3.500-2 3.500 0v6.500h-3.500zM8.75 11.2c0-2 3.500-2 3.500 0v6.500h-3.500z" fill="#0000e0"/><path d="M4 11h8v2l-2 2.500h-4l-2-2.500z" fill="#0000e0"/><path d="M6.500 7.500h3v4h-3z" fill="#00c060"/></svg></span>
<span class="ic" style="left:465px;top:49px"><svg width="16" height="16" viewBox="0 0 16 16"><rect x="1" y="2.500" width="14" height="11" fill="#0000e0"/><ellipse cx="8" cy="8" rx="5.800" ry="4.300" fill="#00e000"/><ellipse cx="8" cy="8" rx="4" ry="2.800" fill="#ffff00"/><ellipse cx="8" cy="8" rx="2" ry="1.200" fill="#e00000"/></svg></span>
<span class="ic" style="left:488px;top:49px"><svg width="16" height="16" viewBox="0 0 16 16"><path d="M2.500 1v12.500h12M2.500 13.500l2-1.500M2.500 13.500l2 1.500" stroke="#0000d0" fill="none" stroke-width="1.200"/><path d="M3.500 12.500c6-1 9-4.500 11-11" stroke="#e00000" fill="none" stroke-width="1.100"/><text x="6.5" y="7" font-size="7.5" fill="#d000d0" font-family="Liberation Sans, sans-serif" font-weight="bold" text-anchor="middle">E</text><text x="14" y="12" font-size="6.5" fill="#d000d0" font-family="Liberation Sans, sans-serif" font-weight="bold" text-anchor="middle">x</text></svg></span>
<span class="sep" style="left:509px;top:49px"></span>
<span class="grip" style="left:513px;top:48px"></span>
<span class="ic" style="left:520px;top:49px"><svg width="16" height="16" viewBox="0 0 16 16"><g color="#fff" transform="translate(1 1)"><text x="8" y="14" font-size="14" fill="currentColor" font-family="Liberation Sans, sans-serif" text-anchor="middle" textLength="15" lengthAdjust="spacingAndGlyphs">ALL</text></g><g color="#aca899"><text x="8" y="14" font-size="14" fill="currentColor" font-family="Liberation Sans, sans-serif" text-anchor="middle" textLength="15" lengthAdjust="spacingAndGlyphs">ALL</text></g></svg></span>
<span class="ic" style="left:543px;top:49px"><svg width="16" height="16" viewBox="0 0 16 16"><g color="#fff" transform="translate(1 1)"><rect x=".5" y=".5" width="15" height="15" fill="none" stroke="currentColor"/><circle cx="6" cy="6" r="4.700" fill="none" stroke="currentColor" stroke-width="1.100"/><path d="M9.500 9.500l5.500 5.500" stroke="currentColor" stroke-width="2.200"/><path d="M9.800 9.800l5 5" stroke="none" stroke-width=".7"/></g><g color="#aca899"><rect x=".5" y=".5" width="15" height="15" fill="none" stroke="currentColor"/><circle cx="6" cy="6" r="4.700" fill="none" stroke="currentColor" stroke-width="1.100"/><path d="M9.500 9.500l5.500 5.500" stroke="currentColor" stroke-width="2.200"/><path d="M9.800 9.800l5 5" stroke="none" stroke-width=".7"/></g></svg></span>
<span class="ic" style="left:566px;top:49px"><svg width="16" height="16" viewBox="0 0 16 16"><g color="#fff" transform="translate(1 1)"><circle cx="6" cy="6" r="4.700" fill="none" stroke="currentColor" stroke-width="1.100"/><path d="M9.500 9.500l5.500 5.500" stroke="currentColor" stroke-width="2.200"/><path d="M9.800 9.800l5 5" stroke="none" stroke-width=".7"/><path d="M3.500 6h5M6 3.500v5" stroke="currentColor"/></g><g color="#aca899"><circle cx="6" cy="6" r="4.700" fill="none" stroke="currentColor" stroke-width="1.100"/><path d="M9.500 9.500l5.500 5.500" stroke="currentColor" stroke-width="2.200"/><path d="M9.800 9.800l5 5" stroke="none" stroke-width=".7"/><path d="M3.500 6h5M6 3.500v5" stroke="currentColor"/></g></svg></span>
<span class="ic" style="left:589px;top:49px"><svg width="16" height="16" viewBox="0 0 16 16"><g color="#fff" transform="translate(1 1)"><circle cx="6" cy="6" r="4.700" fill="none" stroke="currentColor" stroke-width="1.100"/><path d="M9.500 9.500l5.500 5.500" stroke="currentColor" stroke-width="2.200"/><path d="M9.800 9.800l5 5" stroke="none" stroke-width=".7"/><path d="M3.500 6h5" stroke="currentColor"/></g><g color="#aca899"><circle cx="6" cy="6" r="4.700" fill="none" stroke="currentColor" stroke-width="1.100"/><path d="M9.500 9.500l5.500 5.500" stroke="currentColor" stroke-width="2.200"/><path d="M9.800 9.800l5 5" stroke="none" stroke-width=".7"/><path d="M3.500 6h5" stroke="currentColor"/></g></svg></span>
<span class="ic" style="left:612px;top:49px"><svg width="16" height="16" viewBox="0 0 16 16"><g color="#fff" transform="translate(1 1)"><path d="M2.500 2.500h8l3 3v8h-11z" fill="none" stroke="currentColor"/><path d="M10.500 2.500v3h3" fill="none" stroke="currentColor"/><path d="M9.500 5.500h-3v3M5 7l1.500 1.800 1.500-1.800M6.500 11.500h3v-3M8 10l1.500-1.800 1.500 1.800" stroke="currentColor" fill="none"/></g><g color="#aca899"><path d="M2.500 2.500h8l3 3v8h-11z" fill="none" stroke="currentColor"/><path d="M10.500 2.500v3h3" fill="none" stroke="currentColor"/><path d="M9.500 5.500h-3v3M5 7l1.500 1.800 1.500-1.800M6.500 11.500h3v-3M8 10l1.500-1.800 1.500 1.800" stroke="currentColor" fill="none"/></g></svg></span>
<span class="sep" style="left:634px;top:49px"></span>
<span class="ic" style="left:642px;top:49px"><svg width="16" height="16" viewBox="0 0 16 16"><g color="#fff" transform="translate(1 1)"><path d="M1 8l6-4v2.500h8v3h-8v2.500z" fill="currentColor"/></g><g color="#aca899"><path d="M1 8l6-4v2.500h8v3h-8v2.500z" fill="currentColor"/></g></svg></span>
<span class="ic" style="left:664px;top:49px"><svg width="16" height="16" viewBox="0 0 16 16"><g color="#fff" transform="translate(1 1)"><path d="M15 8l-6-4v2.500h-8v3h8v2.500z" fill="currentColor"/></g><g color="#aca899"><path d="M15 8l-6-4v2.500h-8v3h8v2.500z" fill="currentColor"/></g></svg></span>
<span class="ic" style="left:687px;top:49px"><svg width="16" height="16" viewBox="0 0 16 16"><g color="#fff" transform="translate(1 1)"><path d="M8 15l-4-7h2.500v-7h3v7h2.500z" fill="currentColor"/></g><g color="#aca899"><path d="M8 15l-4-7h2.500v-7h3v7h2.500z" fill="currentColor"/></g></svg></span>
<span class="ic" style="left:710px;top:49px"><svg width="16" height="16" viewBox="0 0 16 16"><g color="#fff" transform="translate(1 1)"><path d="M8 1l-4 7h2.500v7h3v-7h2.500z" fill="currentColor"/></g><g color="#aca899"><path d="M8 1l-4 7h2.500v7h3v-7h2.500z" fill="currentColor"/></g></svg></span>
<span class="sep" style="left:731px;top:49px"></span>
<span class="grip" style="left:735px;top:48px"></span>
<span class="ic" style="left:743px;top:49px"><svg width="16" height="16" viewBox="0 0 16 16"><g color="#fff" transform="translate(1 1)"><text x="8" y="13.5" font-size="14" fill="currentColor" font-family="Liberation Sans, sans-serif" font-weight="bold" text-anchor="middle" textLength="15" lengthAdjust="spacingAndGlyphs">Vs</text></g><g color="#aca899"><text x="8" y="13.5" font-size="14" fill="currentColor" font-family="Liberation Sans, sans-serif" font-weight="bold" text-anchor="middle" textLength="15" lengthAdjust="spacingAndGlyphs">Vs</text></g></svg></span>
<span class="ic" style="left:765px;top:49px"><svg width="16" height="16" viewBox="0 0 16 16"><g color="#fff" transform="translate(1 1)"><path d="M0 8h3v-2l3 2.500-3 2.500v-2h-3z" fill="currentColor"/><text x="11" y="13.5" font-size="14" fill="currentColor" font-family="Liberation Sans, sans-serif" font-weight="bold" text-anchor="middle">V</text></g><g color="#aca899"><path d="M0 8h3v-2l3 2.500-3 2.500v-2h-3z" fill="currentColor"/><text x="11" y="13.5" font-size="14" fill="currentColor" font-family="Liberation Sans, sans-serif" font-weight="bold" text-anchor="middle">V</text></g></svg></span>
<span class="ic" style="left:788px;top:49px"><svg width="16" height="16" viewBox="0 0 16 16"><g color="#fff" transform="translate(1 1)"><path d="M1 2.500h14M1 13.500h14M8 3.500v9M6 5.500l2-2 2 2M6 10.500l2 2 2-2" stroke="currentColor" fill="none"/></g><g color="#aca899"><path d="M1 2.500h14M1 13.500h14M8 3.500v9M6 5.500l2-2 2 2M6 10.500l2 2 2-2" stroke="currentColor" fill="none"/></g></svg></span>
<span class="ic" style="left:811px;top:49px"><svg width="16" height="16" viewBox="0 0 16 16"><g color="#fff" transform="translate(1 1)"><path d="M1 2.500h14M1 13.500h14" stroke="currentColor"/><text x="8" y="12.5" font-size="12" fill="currentColor" font-family="Liberation Sans, sans-serif" font-weight="bold" text-anchor="middle">?</text></g><g color="#aca899"><path d="M1 2.500h14M1 13.500h14" stroke="currentColor"/><text x="8" y="12.5" font-size="12" fill="currentColor" font-family="Liberation Sans, sans-serif" font-weight="bold" text-anchor="middle">?</text></g></svg></span>
<span class="ic" style="left:834px;top:49px"><svg width="16" height="16" viewBox="0 0 16 16"><g color="#fff" transform="translate(1 1)"><path d="M1.500 15v-13.500h13.500" stroke="currentColor" fill="none"/><rect x="4" y="4" width="11" height="11" fill="currentColor"/></g><g color="#aca899"><path d="M1.500 15v-13.500h13.500" stroke="currentColor" fill="none"/><rect x="4" y="4" width="11" height="11" fill="currentColor"/></g></svg></span>
<span class="ic" style="left:857px;top:49px"><svg width="16" height="16" viewBox="0 0 16 16"><g color="#fff" transform="translate(1 1)"><path d="M1 5h8v3l5-5v-2h-6l2 2-2 2h-7zM1 5h9v10h-9z" fill="currentColor"/><path d="M9 1h6v6" stroke="currentColor" fill="none" stroke-width="2"/></g><g color="#aca899"><path d="M1 5h8v3l5-5v-2h-6l2 2-2 2h-7zM1 5h9v10h-9z" fill="currentColor"/><path d="M9 1h6v6" stroke="currentColor" fill="none" stroke-width="2"/></g></svg></span>
<span class="sep" style="left:878px;top:49px"></span>
<span class="grip" style="left:882px;top:48px"></span>
<span class="ic" style="left:889px;top:49px"><svg width="16" height="16" viewBox="0 0 16 16"><rect x="1" y="7" width="9" height="8" fill="#00e000"/><path d="M1 7.500h9.500v7.500" stroke="#e00000" fill="none"/><rect x="6" y="0" width="10" height="10.500" fill="#ffff00"/><path d="M6.500 0v11h9.500" stroke="#000" fill="none" stroke-width="1.400"/></svg></span>
<span class="ic" style="left:912px;top:49px"><svg width="16" height="16" viewBox="0 0 16 16"><circle cx="8" cy="8" r="7.500" fill="#000060"/><circle cx="7" cy="8" r="5.300" fill="#0030e0"/><circle cx="5.500" cy="8" r="2.700" fill="#00b0ff"/><ellipse cx="5" cy="8" rx="1.200" ry="1.500" fill="#80f0ff"/></svg></span>
<span class="ic" style="left:935px;top:49px"><svg width="16" height="16" viewBox="0 0 16 16"><rect x="1" y="7" width="9" height="8" fill="#00d000" stroke="#e03000" stroke-width="1.200"/><rect x="6" y="1.500" width="10" height="10" fill="#ffff00"/><path d="M5 1.500h11M5 6.500h11M5 11.500h11M6.500 0v13M11.500 0v13" stroke="#000084" stroke-width="1.300"/></svg></span>
<span class="ic" style="left:958px;top:49px"><svg width="16" height="16" viewBox="0 0 16 16"><circle cx="8" cy="8" r="7.300" fill="#0000c0"/><rect x="6" y="1" width="4.500" height="4.500" fill="#00e8ff"/><rect x="10.500" y="3" width="4" height="4" fill="#000"/><rect x="2" y="6" width="4.500" height="4.500" fill="#ffff00"/><rect x="6.500" y="5.500" width="4" height="4.500" fill="#0000c0"/><rect x="10.500" y="7" width="4.500" height="4" fill="#00e8ff"/><rect x="6" y="10" width="4.500" height="4" fill="#ffff00"/><rect x="10" y="11" width="4" height="3.500" fill="#00e8ff"/><rect x="4" y="2.500" width="3" height="3.500" fill="#ffff00"/></svg></span>
<span class="pressed" style="left:978px;top:47px;width:23px;height:23px"></span>
<span class="ic" style="left:981px;top:49px"><svg width="16" height="16" viewBox="0 0 16 16"><rect x="1" y="7.500" width="13" height="6.500" fill="#ffff00"/><path d="M1 6.500h13M1 14.500h14M14.500 1v14" stroke="#0000d0" stroke-width="1.200" fill="none"/><text x="7.5" y="13.5" font-size="7.5" fill="#e00000" font-family="Liberation Sans, sans-serif" font-weight="bold" text-anchor="middle" textLength="13" lengthAdjust="spacingAndGlyphs">BAR</text></svg></span>
<span class="pressed" style="left:1001px;top:47px;width:23px;height:23px"></span>
<span class="ic" style="left:1005px;top:49px"><svg width="16" height="16" viewBox="0 0 16 16"><rect x="1" y="1" width="14" height="14" fill="#ffff00"/><rect x="7" y="1" width="3" height="4" fill="#00e8e8"/><rect x="10.500" y="1" width="3" height="4" fill="#00d000"/><path d="M1.500 1v14M6.500 1.500h8M6.500 1v4.500h9M10.200 1v4.500M13.800 1v4.500" stroke="#0000b0" fill="none" stroke-width="1.100"/><text x="8.5" y="13" font-size="8.5" fill="#000" font-family="Liberation Sans, sans-serif" text-anchor="middle" textLength="12" lengthAdjust="spacingAndGlyphs">XY</text></svg></span>
<span class="ic" style="left:3px;top:71px"><svg width="16" height="16" viewBox="0 0 16 16"><rect x="1.500" y="1.500" width="13" height="13" fill="#848400" stroke="#000"/><rect x="4" y="2" width="8" height="5.500" fill="#fff"/><rect x="4.500" y="9.500" width="7.500" height="5" fill="#000"/><rect x="9" y="10.500" width="2" height="3" fill="#c6c6c6"/></svg></span>
<span class="sep" style="left:25px;top:71px"></span>
<span class="ic" style="left:31px;top:71px"><svg width="16" height="16" viewBox="0 0 16 16"><rect x="1.500" y="1.500" width="14" height="14" fill="#fff" stroke="#000" stroke-width="1.400"/><path d="M3 5h11M3 12h11M5 3v11M12 3v11" stroke="#000" stroke-dasharray="1 1.500" stroke-width=".9"/><path d="M8.500 3.500v4M8.500 9.500v4M3.500 8.500h4M9.500 8.500h4M7 6l1.500 1.500 1.500-1.500M7 11l1.500-1.500 1.500 1.500" stroke="#000" fill="none" stroke-width=".9"/></svg></span>
<span class="sep" style="left:54px;top:71px"></span>
<span class="ic" style="left:61px;top:71px"><svg width="16" height="16" viewBox="0 0 16 16"><g color="#0000b0"><text x="8" y="14" font-size="14" fill="currentColor" font-family="Liberation Sans, sans-serif" text-anchor="middle" textLength="15" lengthAdjust="spacingAndGlyphs">ALL</text></g></svg></span>
<span class="ic" style="left:83px;top:71px"><svg width="16" height="16" viewBox="0 0 16 16"><g color="#000"><circle cx="6" cy="6" r="4.700" fill="#fff" stroke="currentColor" stroke-width="1.100"/><path d="M9.500 9.500l5.500 5.500" stroke="currentColor" stroke-width="2.200"/><path d="M9.800 9.800l5 5" stroke="#fff" stroke-width=".7"/></g><path d="M3.500 6h5M6 3.500v5" stroke="#0000d0" stroke-width="1.400"/></svg></span>
<span class="ic" style="left:106px;top:71px"><svg width="16" height="16" viewBox="0 0 16 16"><g color="#000"><circle cx="6" cy="6" r="4.700" fill="#fff" stroke="currentColor" stroke-width="1.100"/><path d="M9.500 9.500l5.500 5.500" stroke="currentColor" stroke-width="2.200"/><path d="M9.800 9.800l5 5" stroke="#fff" stroke-width=".7"/></g><path d="M3.500 6h5" stroke="#e00000" stroke-width="1.400"/></svg></span>
<span class="ic" style="left:129px;top:71px"><svg width="16" height="16" viewBox="0 0 16 16"><g color="#000"><path d="M2.500 2.500h8l3 3v8h-11z" fill="#fff" stroke="currentColor"/><path d="M10.500 2.500v3h3" fill="none" stroke="currentColor"/><path d="M9.500 5.500h-3v3M5 7l1.500 1.800 1.500-1.800M6.500 11.500h3v-3M8 10l1.500-1.800 1.500 1.800" stroke="currentColor" fill="none"/></g></svg></span>
<span class="sep" style="left:152px;top:71px"></span>
<span class="ic" style="left:158px;top:71px"><svg width="16" height="16" viewBox="0 0 16 16"><path d="M8 8.500v-7M8 8.500l-5.500 6M8 8.500l5.500 6" stroke="#e02020" stroke-width="1.100" fill="none"/><text x="11" y="5" font-size="6.5" fill="#000080" font-family="Liberation Sans, sans-serif" font-weight="bold" text-anchor="middle">z</text><text x="2.5" y="9.5" font-size="6.5" fill="#000080" font-family="Liberation Sans, sans-serif" font-weight="bold" text-anchor="middle">x</text><text x="13.5" y="10" font-size="6.5" fill="#000080" font-family="Liberation Sans, sans-serif" font-weight="bold" text-anchor="middle">y</text></svg></span>
<span class="ic" style="left:179px;top:71px"><svg width="16" height="16" viewBox="0 0 16 16"><g color="#fff" transform="translate(1 1)"><path d="M3 1.500h10M3 4h10M3 6.500h10M3 9h10M3 11.500h10M3 14h10" stroke="currentColor" stroke-width=".9"/></g><g color="#aca899"><path d="M3 1.500h10M3 4h10M3 6.500h10M3 9h10M3 11.500h10M3 14h10" stroke="currentColor" stroke-width=".9"/></g></svg></span>
<span class="ic" style="left:205px;top:71px"><svg width="16" height="16" viewBox="0 0 16 16"><g color="#fff" transform="translate(1 1)"><text x="8" y="6.5" font-size="7" fill="currentColor" font-family="Liberation Sans, sans-serif" font-weight="bold" text-anchor="middle" textLength="15" lengthAdjust="spacingAndGlyphs">PORT</text><path d="M.5 8.500h15v6.500h-15zM.5 11.700h15M4.300 8.500v6.500M8 8.500v6.500M11.700 8.500v6.500" stroke="currentColor" fill="none"/></g><g color="#aca899"><text x="8" y="6.5" font-size="7" fill="currentColor" font-family="Liberation Sans, sans-serif" font-weight="bold" text-anchor="middle" textLength="15" lengthAdjust="spacingAndGlyphs">PORT</text><path d="M.5 8.500h15v6.500h-15zM.5 11.700h15M4.300 8.500v6.500M8 8.500v6.500M11.700 8.500v6.500" stroke="currentColor" fill="none"/></g></svg></span>
<span class="ic" style="left:228px;top:71px"><svg width="16" height="16" viewBox="0 0 16 16"><path d="M1 14.500l6.500-12.500v12.500z" fill="#c00060"/><path d="M1 14.500l6.500-12.500" stroke="#0000d0" stroke-width="1.300"/><path d="M7.500 14.500v-7l7.500 7z" fill="#fff" stroke="#0000d0" stroke-width="1.200"/><path d="M1 14.500h14.500" stroke="#0000d0" stroke-width="1.400"/><path d="M9 5.500c2-3 5-2 6 1M9 2v3.800h3.500" stroke="#0000d0" fill="none" stroke-width="1.300"/></svg></span>
<span class="sep" style="left:250px;top:71px"></span>
<span class="ic" style="left:257px;top:71px"><svg width="16" height="16" viewBox="0 0 16 16"><path d="M1 4.5c2.500-4 4.500-4 7 0s4.500 4 7 0v3c-2.500 4-4.500 4-7 0s-4.500-4-7 0z" fill="#e00000"/><path d="M1 6.6c2.500-4 4.500-4 7 0s4.500 4 7 0v3c-2.500 4-4.500 4-7 0s-4.500-4-7 0z" fill="#00a000"/><path d="M1 8.7c2.500-4 4.500-4 7 0s4.500 4 7 0v3c-2.500 4-4.500 4-7 0s-4.500-4-7 0z" fill="#0000e0"/><path d="M1 10.8c2.500-4 4.500-4 7 0s4.500 4 7 0v3c-2.500 4-4.500 4-7 0s-4.500-4-7 0z" fill="#00c0e0"/></svg></span>
<span class="ic" style="left:280px;top:71px"><svg width="16" height="16" viewBox="0 0 16 16"><g color="#fff" transform="translate(1 1)"><path d="M2 4c2.500-4 4.500-4 6 0s3.500 4 6 0v6c-2.500 4-4.500 4-6 0s-3.500-4-6 0z" fill="currentColor"/><path d="M3 14.500h11M11.500 12.500l2.500 2-2.500 2" stroke="currentColor" fill="none"/></g><g color="#aca899"><path d="M2 4c2.500-4 4.500-4 6 0s3.500 4 6 0v6c-2.500 4-4.500 4-6 0s-3.500-4-6 0z" fill="currentColor"/><path d="M3 14.500h11M11.500 12.500l2.500 2-2.500 2" stroke="currentColor" fill="none"/></g></svg></span>
<span class="sep" style="left:303px;top:71px"></span>
<span class="ic" style="left:310px;top:71px"><svg width="16" height="16" viewBox="0 0 16 16"><rect x="1" y="1" width="14" height="14" fill="#aca899"/><path d="M4 4h3v2h2v-2h3v3h-2v2h2v3h-3v-2h-2v2h-3v-3h2v-2h-2z" fill="#d8d5c4"/></svg></span>
<span class="sep" style="left:331px;top:71px"></span>
<span class="ic" style="left:337px;top:71px"><svg width="16" height="16" viewBox="0 0 16 16"><circle cx="8" cy="6" r="5.500" fill="#ffff00"/><path d="M5.500 10h5v2h-5z" fill="#ffff40"/><path d="M5.500 11.500h5M5.500 13.500h5M6.500 15.300h3" stroke="#000" stroke-width="1"/><path d="M6 12.500l4 1" stroke="#606000" stroke-width=".8"/></svg></span>
<span class="sep" style="left:359px;top:71px"></span>
<span class="ic" style="left:366px;top:71px"><svg width="16" height="16" viewBox="0 0 16 16"><rect x="4" y="5" width="12" height="9" fill="#a00020"/><rect x="1.500" y="2.500" width="12" height="9" fill="#ff20ff" stroke="#000070" stroke-width="1.600"/></svg></span>
<span class="ic" style="left:390px;top:71px"><svg width="16" height="16" viewBox="0 0 16 16"><rect x="9" y="8.500" width="6.500" height="6.500" fill="#008484" stroke="#000" stroke-width="1.100"/><path d="M2.500 6.500l5-4.500 5 6-5.500 5z" fill="#fff" stroke="#000" stroke-width="1.100"/><path d="M6.500 .8v5M5 2.500l1.500-1.700 1.500 1.700M12.300 8c1.500 1 2 3 1.700 5" stroke="#000" fill="none" stroke-width="1.100"/></svg></span>
<span class="ic" style="left:1260px;top:80px"><svg width="16" height="16" viewBox="0 0 16 16"><path d="M1 5h9l5.500 5.500h-9z" fill="#00e000"/><path d="M6.500 10.500h9" stroke="#009000"/></svg></span>
<span class="ic" style="left:1260px;top:103px"><svg width="16" height="16" viewBox="0 0 16 16"><path d="M1 2.500h14v4.500h-4.500v8h-5v-8h-4.500z" fill="#00e000"/><path d="M1 7h4.500M10.500 7h4.500" stroke="#009000" stroke-width=".8"/></svg></span>
<span class="ic" style="left:1260px;top:124px"><svg width="16" height="16" viewBox="0 0 16 16"><path d="M.5 1.500h4l3.500 4.500 3.500-4.500h4l-5.500 7.500v6.500h-4v-6.500z" fill="#00e000"/></svg></span>
<span class="ic" style="left:1260px;top:146px"><svg width="16" height="16" viewBox="0 0 16 16"><path d="M1 5.500h7v-2.500h7.500v9h-7.500v-2.500h-7z" fill="#00e000"/><path d="M1 9.500h7v2.500h7.500" stroke="#009000" fill="none" stroke-width=".9"/></svg></span>
<span class="ic" style="left:1260px;top:170px"><svg width="16" height="16" viewBox="0 0 16 16"><path d="M1 3h6.500c4 0 6.500 2.500 6.500 6v5.500h-4.500v-5c0-1.500-1-2.500-2.500-2.500h-6z" fill="#00e000"/><path d="M1 7h6c1.500 0 2.500 1 2.500 2.500v5" stroke="#009000" fill="none" stroke-width=".9"/></svg></span>
<span class="hsep" style="left:1259px;top:190px"></span>
<span class="ic" style="left:1260px;top:196px"><svg width="16" height="16" viewBox="0 0 16 16"><ellipse cx="8" cy="8" rx="7.300" ry="4.200" fill="#00e000"/><path d="M1 9.500c2 3.500 12 3.500 14 0" stroke="#009000" fill="none"/></svg></span>
<span class="ic" style="left:1260px;top:219px"><svg width="16" height="16" viewBox="0 0 16 16"><ellipse cx="8" cy="8" rx="6.300" ry="4" fill="none" stroke="#00e000" stroke-width="2.600"/><path d="M1.500 10c2 3.300 11 3.300 13 0" stroke="#009000" fill="none" stroke-width=".9"/></svg></span>
<span class="ic" style="left:1260px;top:240px"><svg width="16" height="16" viewBox="0 0 16 16"><path d="M1.500 11c1-6 12-6 13 0l-2.500 1c-1-3.500-7-3.500-8 0z" fill="#00e000"/><path d="M12 12l2.500-1 .5 2z" fill="#009000"/></svg></span>
<span class="hsep" style="left:1259px;top:262px"></span>
<span class="ic" style="left:1260px;top:268px"><svg width="16" height="16" viewBox="0 0 16 16"><path d="M2 4.500c0-3.500 12-3.500 12 0v7c0 3.500-12 3.500-12 0z" fill="#00e000" stroke="#006000"/><ellipse cx="5" cy="8" rx="2.800" ry="5.500" fill="#008a20"/></svg></span>
<span class="ic" style="left:1260px;top:290px"><svg width="16" height="16" viewBox="0 0 16 16"><path d="M2 3.500l3-2 10 8.500-3.500 4z" fill="#009a20" stroke="#005000" stroke-width="1.200"/><ellipse cx="3.800" cy="4" rx="2.400" ry="3" fill="#007018" stroke="#004000"/><path d="M9 8l5.500 3.500-2.500 2.500z" fill="#00e000"/></svg></span>
<span class="hsep" style="left:1259px;top:312px"></span>
<span class="ic" style="left:1260px;top:318px"><svg width="16" height="16" viewBox="0 0 16 16"><circle cx="8" cy="8" r="6.800" fill="#00e000" stroke="#007000" stroke-width="1.400"/><path d="M6 8h4M8 6v4" stroke="#fff" stroke-width="1.200"/></svg></span>
<span class="hsep" style="left:1259px;top:340px"></span>
<span class="ic" style="left:1260px;top:346px"><svg width="16" height="16" viewBox="0 0 16 16"><g fill="none" stroke="#00008c" stroke-width="1.100"><ellipse cx="8" cy="3" rx="3.800" ry="1.700"/><ellipse cx="8" cy="6.300" rx="3.800" ry="1.700"/><ellipse cx="8" cy="9.600" rx="3.800" ry="1.700"/><ellipse cx="8" cy="12.900" rx="3.800" ry="1.700"/></g></svg></span>
<span class="ic" style="left:1260px;top:369px"><svg width="16" height="16" viewBox="0 0 16 16"><g fill="none" stroke="#00008c" stroke-width="1.100"><path d="M13 1.500c-6-1.500-12 1-10 3.500s11 3 11 0"/><ellipse cx="8" cy="7.500" rx="5" ry="2"/><ellipse cx="8" cy="10.500" rx="3.300" ry="1.600"/><ellipse cx="8" cy="13.300" rx="1.800" ry="1.200"/></g></svg></span>
<span class="hsep" style="left:1259px;top:390px"></span>
<span class="ic" style="left:1260px;top:396px"><svg width="16" height="16" viewBox="0 0 16 16"><rect x="1" y="1" width="14" height="14" fill="#00008c"/><circle cx="8" cy="8" r="5" fill="#ece9d8"/></svg></span>
<span class="ic" style="left:1260px;top:419px"><svg width="16" height="16" viewBox="0 0 16 16"><rect x="0" y="2" width="16" height="12.500" fill="#00008c"/><path d="M6 4h4l2.500 2.500v3.500l-2.500 2.500h-4l-2.500-2.500v-3.500z" fill="#ece9d8"/></svg></span>
<span class="hsep" style="left:1259px;top:440px"></span>
<span class="ic" style="left:1260px;top:446px"><svg width="16" height="16" viewBox="0 0 16 16"><path d="M8 9.500v-3h3v5.500h-6.500v-8.500h9.500v10M1 8h3.500M1.500 3.500v11h10" fill="none" stroke="#00008c" stroke-width="1.300"/></svg></span>
<span class="ic" style="left:1260px;top:468px"><svg width="16" height="16" viewBox="0 0 16 16"><g fill="none" stroke="#00008c" stroke-width="1.200"><circle cx="7.500" cy="8.500" r="1.800"/><circle cx="7.500" cy="8.500" r="4"/><path d="M2 4c3-3.500 9-3.500 12 1.500l2 .5M3 13c2 3 8 3 11 0"/></g></svg></span>
<span class="ic" style="left:1260px;top:491px"><svg width="16" height="16" viewBox="0 0 16 16"><g fill="none" stroke="#00008c" stroke-width="1.200"><circle cx="8" cy="8" r="1.700"/><circle cx="8" cy="8" r="4"/><path d="M14.500 8a6.500 6.500 0 1 0-3 5.500l2 1.500"/></g></svg></span>
<span class="hsep" style="left:1259px;top:512px"></span>
<span class="ic" style="left:1260px;top:518px"><svg width="16" height="16" viewBox="0 0 16 16"><rect x="3" y="1" width="10" height="14" fill="none" stroke="#00008c" stroke-width="1.500"/><path d="M5.500 3v10h2.500v-10h2.500v10" fill="none" stroke="#00008c" stroke-width="1.400"/><rect x="6" y="0" width="4" height="2" fill="#00008c"/><rect x="6" y="14" width="4" height="2" fill="#00008c"/></svg></span>
<span class="ic" style="left:1260px;top:542px"><svg width="16" height="16" viewBox="0 0 16 16"><rect x="0" y="5" width="16" height="9" fill="#00e8ff"/><path d="M4 5c0-3 8-3 8 0v9h-8z" fill="#0000c0"/><path d="M0 4.500h16" stroke="#006000" stroke-width="1.300"/><path d="M5 3.500h6" stroke="#00c000" stroke-width="1.500"/></svg></span>
<span class="ic" style="left:1260px;top:564px"><svg width="16" height="16" viewBox="0 0 16 16"><path d="M1 10l6-6.500h7v6.500" fill="#f4f2e8" stroke="#aca899"/><rect x="0" y="10" width="16" height="4.500" fill="#aca899"/></svg></span>
<span class="ic" style="left:1260px;top:586px"><svg width="16" height="16" viewBox="0 0 16 16"><rect x="0" y="3" width="16" height="11" fill="#ffff00"/><path d="M3.500 14c0-10 9-10 9 0z" fill="#0000c0"/><path d="M0 3h16M0 14h16" stroke="#0000c0" stroke-width="1.300"/></svg></span>
<span class="hsep" style="left:1259px;top:604px"></span>
<div class="abs" style="left:1258px;top:69px;width:22px;height:2px;border-top:1px solid #aca899;border-bottom:1px solid #fff"></div>
<div class="abs" style="left:1258px;top:72px;width:20px;height:3px;border:1px solid;border-color:#fff #aca899 #aca899 #fff"></div>
<div class="abs" style="left:1257px;top:811px;width:23px;height:2px;border-top:1px solid #aca899;border-bottom:1px solid #fff"></div>
<div class="vpwrap"><svg class="vp" width="1253" height="699" viewBox="2 94 1253 699"><polygon points="856,327.5 1022,200.8 1028.7,237 895.5,338.6" fill="#15140f" />
<polygon points="1022,200.8 1061.5,212 1028.7,237" fill="#23211a" />
<polygon points="856,327.5 895.5,338.6 971.5,747.7 938.6,772.8" fill="#1f1c15" />
<polygon points="938.6,772.8 971.5,747.7 978.3,784.6" fill="#24251d" />
<defs><linearGradient id="rb" gradientUnits="userSpaceOnUse" x1="1022" y1="200.8" x2="1058.2" y2="194.1"><stop offset="0" stop-color="#40573a"/><stop offset="0.5" stop-color="#3c4b34"/><stop offset="1" stop-color="#3d4531"/></linearGradient></defs>
<polygon points="1028.7,237 1061.5,212 1143.9,657.9 1104.3,646.3" fill="url(#rb)" />
<polygon points="971.5,747.7 1104.3,646.3 1143.9,657.9 978.3,784.6" fill="#33432f" />
<polygon points="895.5,338.6 1028.7,237 1104.3,646.3 971.5,747.7" fill="#456844" />
<path d="M1061.5 212L1028.7 237" stroke="#8e9a86" stroke-width="1" fill="none"/>
<path d="M971.5 747.7L978.3 784.6" stroke="#a9b3a1" stroke-width="1" fill="none"/>
<path d="M1022 200.8L1061.5 212M1022 200.8L856 327.5M1028.7 237L895.5 338.6M856 327.5L895.5 338.6M1022 200.8L1104.3 646.3M1061.5 212L1143.9 657.9M856 327.5L938.6 772.8M895.5 338.6L971.5 747.7M1104.3 646.3L1143.9 657.9M938.6 772.8L978.3 784.6M938.6 772.8L1104.3 646.3M978.3 784.6L1143.9 657.9" fill="none" stroke="#eef3e8" stroke-width="1" shape-rendering="crispEdges"/>
<path d="M928 509L1035 427" stroke="#dfe8d8" stroke-width="0.9" fill="none"/>
<path d="M1041 416.5L1092.5 377" stroke="#b4bcad" stroke-width="2.4" stroke-dasharray="1.1 0.9" fill="none"/><path d="M127.6 111.5L132.5 143.5L120.3 173.2L104.5 179.2L96.3 158.6L105.4 128.2L129.8 104L159 101.3L180.8 122.1L184.8 159.1L172.6 188.8L156.8 194.8L148.6 174.2L157.7 143.8L182.1 119.6L211.3 116.9L233.1 137.7L237.1 174.7L224.9 204.4L209.1 210.4L200.9 189.8L210 159.4L234.4 135.2L263.6 132.5L285.4 153.3L289.4 190.3L277.2 220L261.4 226L253.2 205.4L262.3 175L286.7 150.8L315.9 148.1L337.7 168.9L341.7 205.9L329.5 235.6L313.7 241.6L305.5 221L314.6 190.6L339 166.4L368.2 163.7L390 184.5L394 221.5L381.8 251.2L366 257.2L357.8 236.6L366.9 206.2L391.3 182L420.5 179.3L442.3 200.1L446.3 237.1L434.1 266.8L418.3 272.8L410.1 252.2L419.2 221.8L443.6 197.6L472.8 194.9L494.6 215.7L498.6 252.7L486.4 282.4L470.6 288.4L462.4 267.8L471.5 237.4L495.9 213.2L525.1 210.5L546.9 231.3L550.9 268.3L538.7 298L522.9 304L514.7 283.4L523.8 253L548.2 228.8L577.4 226.1L599.2 246.9L603.2 283.9L591 313.6L575.2 319.6L567 299L576.1 268.6L600.5 244.4L629.7 241.7L651.5 262.5L655.5 299.5L643.3 329.2L627.5 335.2L619.3 314.6L628.4 284.2L652.8 260L682 257.3L703.8 278.1L707.8 315.1L695.6 344.8L679.8 350.8L671.6 330.2L680.7 299.8L705.1 275.6L734.3 272.9L756.1 293.7L760.1 330.7L747.9 360.4L732.1 366.4L723.9 345.8L733 315.4L757.4 291.2L786.6 288.5L808.4 309.3L812.4 346.3L800.2 376L784.4 382L776.2 361.4L785.3 331L809.7 306.8L838.9 304.1L860.7 324.9L864.7 361.9L852.5 391.6L836.7 397.6L828.5 377L837.6 346.6L862 322.4L891.2 319.7L913 340.5L917 377.5L904.8 407.2L889 413.2L880.8 392.6L889.9 362.2L914.3 338L943.5 335.3L965.3 356.1L969.3 393.1L957.1 422.8L941.3 428.8L933.1 408.2L942.2 377.8L966.6 353.6L1003.6 352.3L1026.3 376.6L1037.3 443.5" fill="none" stroke="#c4c4bc" stroke-width="4.4" stroke-linejoin="round" stroke-opacity="0.42"/>
<path d="M129.7 111.2L134.6 143.2M127.3 111.5L132.2 143.5M125.5 111.8L130.4 143.8M129.7 111.2L125.5 111.8M134.6 143.2L130.4 143.8M134.4 144.3L122.2 174M132.2 143.4L120 173.1M130.6 142.7L118.4 172.4M134.4 144.3L130.6 142.7M122.2 174L118.4 172.4M121 175.2L105.2 181.2M120.2 172.9L104.4 178.9M119.6 171.2L103.8 177.2M121 175.2L119.6 171.2M105.2 181.2L103.8 177.2M102.4 180.1L94.2 159.5M104.8 179.1L96.6 158.5M106.6 178.3L98.4 157.7M102.4 180.1L106.6 178.3M94.2 159.5L98.4 157.7M94.1 157.9L103.2 127.5M96.6 158.7L105.7 128.3M98.5 159.3L107.6 128.9M94.1 157.9L98.5 159.3M103.2 127.5L107.6 128.9M104.1 126.9L128.5 102.7M105.6 128.4L130 104.2M106.7 129.5L131.1 105.3M104.1 126.9L106.7 129.5M128.5 102.7L131.1 105.3M129.6 102L158.8 99.3M129.8 104.3L159 101.6M130 106L159.2 103.3M129.6 102L130 106M158.8 99.3L159.2 103.3M160.3 99.9L182.1 120.7M158.8 101.5L180.6 122.3M157.7 102.7L179.5 123.5M160.3 99.9L157.7 102.7M182.1 120.7L179.5 123.5M182.9 121.9L186.9 158.9M180.5 122.1L184.5 159.1M178.7 122.3L182.7 159.3M182.9 121.9L178.7 122.3M186.9 158.9L182.7 159.3M186.7 159.9L174.5 189.6M184.5 159L172.3 188.7M182.9 158.3L170.7 188M186.7 159.9L182.9 158.3M174.5 189.6L170.7 188M173.3 190.8L157.5 196.8M172.5 188.5L156.7 194.5M171.9 186.8L156.1 192.8M173.3 190.8L171.9 186.8M157.5 196.8L156.1 192.8M154.7 195.7L146.5 175.1M157.1 194.7L148.9 174.1M158.9 193.9L150.7 173.3M154.7 195.7L158.9 193.9M146.5 175.1L150.7 173.3M146.4 173.5L155.5 143.1M148.9 174.3L158 143.9M150.8 174.9L159.9 144.5M146.4 173.5L150.8 174.9M155.5 143.1L159.9 144.5M156.4 142.5L180.8 118.3M157.9 144L182.3 119.8M159 145.1L183.4 120.9M156.4 142.5L159 145.1M180.8 118.3L183.4 120.9M181.9 117.6L211.1 114.9M182.1 119.9L211.3 117.2M182.3 121.6L211.5 118.9M181.9 117.6L182.3 121.6M211.1 114.9L211.5 118.9M212.6 115.5L234.4 136.3M211.1 117.1L232.9 137.9M210 118.3L231.8 139.1M212.6 115.5L210 118.3M234.4 136.3L231.8 139.1M235.2 137.5L239.2 174.5M232.8 137.7L236.8 174.7M231 137.9L235 174.9M235.2 137.5L231 137.9M239.2 174.5L235 174.9M239 175.5L226.8 205.2M236.8 174.6L224.6 204.3M235.2 173.9L223 203.6M239 175.5L235.2 173.9M226.8 205.2L223 203.6M225.6 206.4L209.8 212.4M224.8 204.1L209 210.1M224.2 202.4L208.4 208.4M225.6 206.4L224.2 202.4M209.8 212.4L208.4 208.4M207 211.3L198.8 190.7M209.4 210.3L201.2 189.7M211.2 209.5L203 188.9M207 211.3L211.2 209.5M198.8 190.7L203 188.9M198.7 189.1L207.8 158.7M201.2 189.9L210.3 159.5M203.1 190.5L212.2 160.1M198.7 189.1L203.1 190.5M207.8 158.7L212.2 160.1M208.7 158.1L233.1 133.9M210.2 159.6L234.6 135.4M211.3 160.7L235.7 136.5M208.7 158.1L211.3 160.7M233.1 133.9L235.7 136.5M234.2 133.2L263.4 130.5M234.4 135.5L263.6 132.8M234.6 137.2L263.8 134.5M234.2 133.2L234.6 137.2M263.4 130.5L263.8 134.5M264.9 131.1L286.7 151.9M263.4 132.7L285.2 153.5M262.3 133.9L284.1 154.7M264.9 131.1L262.3 133.9M286.7 151.9L284.1 154.7M287.5 153.1L291.5 190.1M285.1 153.3L289.1 190.3M283.3 153.5L287.3 190.5M287.5 153.1L283.3 153.5M291.5 190.1L287.3 190.5M291.3 191.1L279.1 220.8M289.1 190.2L276.9 219.9M287.5 189.5L275.3 219.2M291.3 191.1L287.5 189.5M279.1 220.8L275.3 219.2M277.9 222L262.1 228M277.1 219.7L261.3 225.7M276.5 218L260.7 224M277.9 222L276.5 218M262.1 228L260.7 224M259.3 226.9L251.1 206.3M261.7 225.9L253.5 205.3M263.5 225.1L255.3 204.5M259.3 226.9L263.5 225.1M251.1 206.3L255.3 204.5M251 204.7L260.1 174.3M253.5 205.5L262.6 175.1M255.4 206.1L264.5 175.7M251 204.7L255.4 206.1M260.1 174.3L264.5 175.7M261 173.7L285.4 149.5M262.5 175.2L286.9 151M263.6 176.3L288 152.1M261 173.7L263.6 176.3M285.4 149.5L288 152.1M286.5 148.8L315.7 146.1M286.7 151.1L315.9 148.4M286.9 152.8L316.1 150.1M286.5 148.8L286.9 152.8M315.7 146.1L316.1 150.1M317.2 146.7L339 167.5M315.7 148.3L337.5 169.1M314.6 149.5L336.4 170.3M317.2 146.7L314.6 149.5M339 167.5L336.4 170.3M339.8 168.7L343.8 205.7M337.4 168.9L341.4 205.9M335.6 169.1L339.6 206.1M339.8 168.7L335.6 169.1M343.8 205.7L339.6 206.1M343.6 206.7L331.4 236.4M341.4 205.8L329.2 235.5M339.8 205.1L327.6 234.8M343.6 206.7L339.8 205.1M331.4 236.4L327.6 234.8M330.2 237.6L314.4 243.6M329.4 235.3L313.6 241.3M328.8 233.6L313 239.6M330.2 237.6L328.8 233.6M314.4 243.6L313 239.6M311.6 242.5L303.4 221.9M314 241.5L305.8 220.9M315.8 240.7L307.6 220.1M311.6 242.5L315.8 240.7M303.4 221.9L307.6 220.1M303.3 220.3L312.4 189.9M305.8 221.1L314.9 190.7M307.7 221.7L316.8 191.3M303.3 220.3L307.7 221.7M312.4 189.9L316.8 191.3M313.3 189.3L337.7 165.1M314.8 190.8L339.2 166.6M315.9 191.9L340.3 167.7M313.3 189.3L315.9 191.9M337.7 165.1L340.3 167.7M338.8 164.4L368 161.7M339 166.7L368.2 164M339.2 168.4L368.4 165.7M338.8 164.4L339.2 168.4M368 161.7L368.4 165.7M369.5 162.3L391.3 183.1M368 163.9L389.8 184.7M366.9 165.1L388.7 185.9M369.5 162.3L366.9 165.1M391.3 183.1L388.7 185.9M392.1 184.3L396.1 221.3M389.7 184.5L393.7 221.5M387.9 184.7L391.9 221.7M392.1 184.3L387.9 184.7M396.1 221.3L391.9 221.7M395.9 222.3L383.7 252M393.7 221.4L381.5 251.1M392.1 220.7L379.9 250.4M395.9 222.3L392.1 220.7M383.7 252L379.9 250.4M382.5 253.2L366.7 259.2M381.7 250.9L365.9 256.9M381.1 249.2L365.3 255.2M382.5 253.2L381.1 249.2M366.7 259.2L365.3 255.2M363.9 258.1L355.7 237.5M366.3 257.1L358.1 236.5M368.1 256.3L359.9 235.7M363.9 258.1L368.1 256.3M355.7 237.5L359.9 235.7M355.6 235.9L364.7 205.5M358.1 236.7L367.2 206.3M360 237.3L369.1 206.9M355.6 235.9L360 237.3M364.7 205.5L369.1 206.9M365.6 204.9L390 180.7M367.1 206.4L391.5 182.2M368.2 207.5L392.6 183.3M365.6 204.9L368.2 207.5M390 180.7L392.6 183.3M391.1 180L420.3 177.3M391.3 182.3L420.5 179.6M391.5 184L420.7 181.3M391.1 180L391.5 184M420.3 177.3L420.7 181.3M421.8 177.9L443.6 198.7M420.3 179.5L442.1 200.3M419.2 180.7L441 201.5M421.8 177.9L419.2 180.7M443.6 198.7L441 201.5M444.4 199.9L448.4 236.9M442 200.1L446 237.1M440.2 200.3L444.2 237.3M444.4 199.9L440.2 200.3M448.4 236.9L444.2 237.3M448.2 237.9L436 267.6M446 237L433.8 266.7M444.4 236.3L432.2 266M448.2 237.9L444.4 236.3M436 267.6L432.2 266M434.8 268.8L419 274.8M434 266.5L418.2 272.5M433.4 264.8L417.6 270.8M434.8 268.8L433.4 264.8M419 274.8L417.6 270.8M416.2 273.7L408 253.1M418.6 272.7L410.4 252.1M420.4 271.9L412.2 251.3M416.2 273.7L420.4 271.9M408 253.1L412.2 251.3M407.9 251.5L417 221.1M410.4 252.3L419.5 221.9M412.3 252.9L421.4 222.5M407.9 251.5L412.3 252.9M417 221.1L421.4 222.5M417.9 220.5L442.3 196.3M419.4 222L443.8 197.8M420.5 223.1L444.9 198.9M417.9 220.5L420.5 223.1M442.3 196.3L444.9 198.9M443.4 195.6L472.6 192.9M443.6 197.9L472.8 195.2M443.8 199.6L473 196.9M443.4 195.6L443.8 199.6M472.6 192.9L473 196.9M474.1 193.5L495.9 214.3M472.6 195.1L494.4 215.9M471.5 196.3L493.3 217.1M474.1 193.5L471.5 196.3M495.9 214.3L493.3 217.1M496.7 215.5L500.7 252.5M494.3 215.7L498.3 252.7M492.5 215.9L496.5 252.9M496.7 215.5L492.5 215.9M500.7 252.5L496.5 252.9M500.5 253.5L488.3 283.2M498.3 252.6L486.1 282.3M496.7 251.9L484.5 281.6M500.5 253.5L496.7 251.9M488.3 283.2L484.5 281.6M487.1 284.4L471.3 290.4M486.3 282.1L470.5 288.1M485.7 280.4L469.9 286.4M487.1 284.4L485.7 280.4M471.3 290.4L469.9 286.4M468.5 289.3L460.3 268.7M470.9 288.3L462.7 267.7M472.7 287.5L464.5 266.9M468.5 289.3L472.7 287.5M460.3 268.7L464.5 266.9M460.2 267.1L469.3 236.7M462.7 267.9L471.8 237.5M464.6 268.5L473.7 238.1M460.2 267.1L464.6 268.5M469.3 236.7L473.7 238.1M470.2 236.1L494.6 211.9M471.7 237.6L496.1 213.4M472.8 238.7L497.2 214.5M470.2 236.1L472.8 238.7M494.6 211.9L497.2 214.5M495.7 211.2L524.9 208.5M495.9 213.5L525.1 210.8M496.1 215.2L525.3 212.5M495.7 211.2L496.1 215.2M524.9 208.5L525.3 212.5M526.4 209.1L548.2 229.9M524.9 210.7L546.7 231.5M523.8 211.9L545.6 232.7M526.4 209.1L523.8 211.9M548.2 229.9L545.6 232.7M549 231.1L553 268.1M546.6 231.3L550.6 268.3M544.8 231.5L548.8 268.5M549 231.1L544.8 231.5M553 268.1L548.8 268.5M552.8 269.1L540.6 298.8M550.6 268.2L538.4 297.9M549 267.5L536.8 297.2M552.8 269.1L549 267.5M540.6 298.8L536.8 297.2M539.4 300L523.6 306M538.6 297.7L522.8 303.7M538 296L522.2 302M539.4 300L538 296M523.6 306L522.2 302M520.8 304.9L512.6 284.3M523.2 303.9L515 283.3M525 303.1L516.8 282.5M520.8 304.9L525 303.1M512.6 284.3L516.8 282.5M512.5 282.7L521.6 252.3M515 283.5L524.1 253.1M516.9 284.1L526 253.7M512.5 282.7L516.9 284.1M521.6 252.3L526 253.7M522.5 251.7L546.9 227.5M524 253.2L548.4 229M525.1 254.3L549.5 230.1M522.5 251.7L525.1 254.3M546.9 227.5L549.5 230.1M548 226.8L577.2 224.1M548.2 229.1L577.4 226.4M548.4 230.8L577.6 228.1M548 226.8L548.4 230.8M577.2 224.1L577.6 228.1M578.7 224.7L600.5 245.5M577.2 226.3L599 247.1M576.1 227.5L597.9 248.3M578.7 224.7L576.1 227.5M600.5 245.5L597.9 248.3M601.3 246.7L605.3 283.7M598.9 246.9L602.9 283.9M597.1 247.1L601.1 284.1M601.3 246.7L597.1 247.1M605.3 283.7L601.1 284.1M605.1 284.7L592.9 314.4M602.9 283.8L590.7 313.5M601.3 283.1L589.1 312.8M605.1 284.7L601.3 283.1M592.9 314.4L589.1 312.8M591.7 315.6L575.9 321.6M590.9 313.3L575.1 319.3M590.3 311.6L574.5 317.6M591.7 315.6L590.3 311.6M575.9 321.6L574.5 317.6M573.1 320.5L564.9 299.9M575.5 319.5L567.3 298.9M577.3 318.7L569.1 298.1M573.1 320.5L577.3 318.7M564.9 299.9L569.1 298.1M564.8 298.3L573.9 267.9M567.3 299.1L576.4 268.7M569.2 299.7L578.3 269.3M564.8 298.3L569.2 299.7M573.9 267.9L578.3 269.3M574.8 267.3L599.2 243.1M576.3 268.8L600.7 244.6M577.4 269.9L601.8 245.7M574.8 267.3L577.4 269.9M599.2 243.1L601.8 245.7M600.3 242.4L629.5 239.7M600.5 244.7L629.7 242M600.7 246.4L629.9 243.7M600.3 242.4L600.7 246.4M629.5 239.7L629.9 243.7M631 240.3L652.8 261.1M629.5 241.9L651.3 262.7M628.4 243.1L650.2 263.9M631 240.3L628.4 243.1M652.8 261.1L650.2 263.9M653.6 262.3L657.6 299.3M651.2 262.5L655.2 299.5M649.4 262.7L653.4 299.7M653.6 262.3L649.4 262.7M657.6 299.3L653.4 299.7M657.4 300.3L645.2 330M655.2 299.4L643 329.1M653.6 298.7L641.4 328.4M657.4 300.3L653.6 298.7M645.2 330L641.4 328.4M644 331.2L628.2 337.2M643.2 328.9L627.4 334.9M642.6 327.2L626.8 333.2M644 331.2L642.6 327.2M628.2 337.2L626.8 333.2M625.4 336.1L617.2 315.5M627.8 335.1L619.6 314.5M629.6 334.3L621.4 313.7M625.4 336.1L629.6 334.3M617.2 315.5L621.4 313.7M617.1 313.9L626.2 283.5M619.6 314.7L628.7 284.3M621.5 315.3L630.6 284.9M617.1 313.9L621.5 315.3M626.2 283.5L630.6 284.9M627.1 282.9L651.5 258.7M628.6 284.4L653 260.2M629.7 285.5L654.1 261.3M627.1 282.9L629.7 285.5M651.5 258.7L654.1 261.3M652.6 258L681.8 255.3M652.8 260.3L682 257.6M653 262L682.2 259.3M652.6 258L653 262M681.8 255.3L682.2 259.3M683.3 255.9L705.1 276.7M681.8 257.5L703.6 278.3M680.7 258.7L702.5 279.5M683.3 255.9L680.7 258.7M705.1 276.7L702.5 279.5M705.9 277.9L709.9 314.9M703.5 278.1L707.5 315.1M701.7 278.3L705.7 315.3M705.9 277.9L701.7 278.3M709.9 314.9L705.7 315.3M709.7 315.9L697.5 345.6M707.5 315L695.3 344.7M705.9 314.3L693.7 344M709.7 315.9L705.9 314.3M697.5 345.6L693.7 344M696.3 346.8L680.5 352.8M695.5 344.5L679.7 350.5M694.9 342.8L679.1 348.8M696.3 346.8L694.9 342.8M680.5 352.8L679.1 348.8M677.7 351.7L669.5 331.1M680.1 350.7L671.9 330.1M681.9 349.9L673.7 329.3M677.7 351.7L681.9 349.9M669.5 331.1L673.7 329.3M669.4 329.5L678.5 299.1M671.9 330.3L681 299.9M673.8 330.9L682.9 300.5M669.4 329.5L673.8 330.9M678.5 299.1L682.9 300.5M679.4 298.5L703.8 274.3M680.9 300L705.3 275.8M682 301.1L706.4 276.9M679.4 298.5L682 301.1M703.8 274.3L706.4 276.9M704.9 273.6L734.1 270.9M705.1 275.9L734.3 273.2M705.3 277.6L734.5 274.9M704.9 273.6L705.3 277.6M734.1 270.9L734.5 274.9M735.6 271.5L757.4 292.3M734.1 273.1L755.9 293.9M733 274.3L754.8 295.1M735.6 271.5L733 274.3M757.4 292.3L754.8 295.1M758.2 293.5L762.2 330.5M755.8 293.7L759.8 330.7M754 293.9L758 330.9M758.2 293.5L754 293.9M762.2 330.5L758 330.9M762 331.5L749.8 361.2M759.8 330.6L747.6 360.3M758.2 329.9L746 359.6M762 331.5L758.2 329.9M749.8 361.2L746 359.6M748.6 362.4L732.8 368.4M747.8 360.1L732 366.1M747.2 358.4L731.4 364.4M748.6 362.4L747.2 358.4M732.8 368.4L731.4 364.4M730 367.3L721.8 346.7M732.4 366.3L724.2 345.7M734.2 365.5L726 344.9M730 367.3L734.2 365.5M721.8 346.7L726 344.9M721.7 345.1L730.8 314.7M724.2 345.9L733.3 315.5M726.1 346.5L735.2 316.1M721.7 345.1L726.1 346.5M730.8 314.7L735.2 316.1M731.7 314.1L756.1 289.9M733.2 315.6L757.6 291.4M734.3 316.7L758.7 292.5M731.7 314.1L734.3 316.7M756.1 289.9L758.7 292.5M757.2 289.2L786.4 286.5M757.4 291.5L786.6 288.8M757.6 293.2L786.8 290.5M757.2 289.2L757.6 293.2M786.4 286.5L786.8 290.5M787.9 287.1L809.7 307.9M786.4 288.7L808.2 309.5M785.3 289.9L807.1 310.7M787.9 287.1L785.3 289.9M809.7 307.9L807.1 310.7M810.5 309.1L814.5 346.1M808.1 309.3L812.1 346.3M806.3 309.5L810.3 346.5M810.5 309.1L806.3 309.5M814.5 346.1L810.3 346.5M814.3 347.1L802.1 376.8M812.1 346.2L799.9 375.9M810.5 345.5L798.3 375.2M814.3 347.1L810.5 345.5M802.1 376.8L798.3 375.2M800.9 378L785.1 384M800.1 375.7L784.3 381.7M799.5 374L783.7 380M800.9 378L799.5 374M785.1 384L783.7 380M782.3 382.9L774.1 362.3M784.7 381.9L776.5 361.3M786.5 381.1L778.3 360.5M782.3 382.9L786.5 381.1M774.1 362.3L778.3 360.5M774 360.7L783.1 330.3M776.5 361.5L785.6 331.1M778.4 362.1L787.5 331.7M774 360.7L778.4 362.1M783.1 330.3L787.5 331.7M784 329.7L808.4 305.5M785.5 331.2L809.9 307M786.6 332.3L811 308.1M784 329.7L786.6 332.3M808.4 305.5L811 308.1M809.5 304.8L838.7 302.1M809.7 307.1L838.9 304.4M809.9 308.8L839.1 306.1M809.5 304.8L809.9 308.8M838.7 302.1L839.1 306.1M840.2 302.7L862 323.5M838.7 304.3L860.5 325.1M837.6 305.5L859.4 326.3M840.2 302.7L837.6 305.5M862 323.5L859.4 326.3M862.8 324.7L866.8 361.7M860.4 324.9L864.4 361.9M858.6 325.1L862.6 362.1M862.8 324.7L858.6 325.1M866.8 361.7L862.6 362.1M866.6 362.7L854.4 392.4M864.4 361.8L852.2 391.5M862.8 361.1L850.6 390.8M866.6 362.7L862.8 361.1M854.4 392.4L850.6 390.8M853.2 393.6L837.4 399.6M852.4 391.3L836.6 397.3M851.8 389.6L836 395.6M853.2 393.6L851.8 389.6M837.4 399.6L836 395.6M834.6 398.5L826.4 377.9M837 397.5L828.8 376.9M838.8 396.7L830.6 376.1M834.6 398.5L838.8 396.7M826.4 377.9L830.6 376.1M826.3 376.3L835.4 345.9M828.8 377.1L837.9 346.7M830.7 377.7L839.8 347.3M826.3 376.3L830.7 377.7M835.4 345.9L839.8 347.3M836.3 345.3L860.7 321.1M837.8 346.8L862.2 322.6M838.9 347.9L863.3 323.7M836.3 345.3L838.9 347.9M860.7 321.1L863.3 323.7M861.8 320.4L891 317.7M862 322.7L891.2 320M862.2 324.4L891.4 321.7M861.8 320.4L862.2 324.4M891 317.7L891.4 321.7M892.5 318.3L914.3 339.1M891 319.9L912.8 340.7M889.9 321.1L911.7 341.9M892.5 318.3L889.9 321.1M914.3 339.1L911.7 341.9M915.1 340.3L919.1 377.3M912.7 340.5L916.7 377.5M910.9 340.7L914.9 377.7M915.1 340.3L910.9 340.7M919.1 377.3L914.9 377.7M918.9 378.3L906.7 408M916.7 377.4L904.5 407.1M915.1 376.7L902.9 406.4M918.9 378.3L915.1 376.7M906.7 408L902.9 406.4M905.5 409.2L889.7 415.2M904.7 406.9L888.9 412.9M904.1 405.2L888.3 411.2M905.5 409.2L904.1 405.2M889.7 415.2L888.3 411.2M886.9 414.1L878.7 393.5M889.3 413.1L881.1 392.5M891.1 412.3L882.9 391.7M886.9 414.1L891.1 412.3M878.7 393.5L882.9 391.7M878.6 391.9L887.7 361.5M881.1 392.7L890.2 362.3M883 393.3L892.1 362.9M878.6 391.9L883 393.3M887.7 361.5L892.1 362.9M888.6 360.9L913 336.7M890.1 362.4L914.5 338.2M891.2 363.5L915.6 339.3M888.6 360.9L891.2 363.5M913 336.7L915.6 339.3M914.1 336L943.3 333.3M914.3 338.3L943.5 335.6M914.5 340L943.7 337.3M914.1 336L914.5 340M943.3 333.3L943.7 337.3M944.8 333.9L966.6 354.7M943.3 335.5L965.1 356.3M942.2 336.7L964 357.5M944.8 333.9L942.2 336.7M966.6 354.7L964 357.5M967.4 355.9L971.4 392.9M965 356.1L969 393.1M963.2 356.3L967.2 393.3M967.4 355.9L963.2 356.3M971.4 392.9L967.2 393.3M971.2 393.9L959 423.6M969 393L956.8 422.7M967.4 392.3L955.2 422M971.2 393.9L967.4 392.3M959 423.6L955.2 422M957.8 424.8L942 430.8M957 422.5L941.2 428.5M956.4 420.8L940.6 426.8M957.8 424.8L956.4 420.8M942 430.8L940.6 426.8M939.2 429.7L931 409.1M941.6 428.7L933.4 408.1M943.4 427.9L935.2 407.3M939.2 429.7L943.4 427.9M931 409.1L935.2 407.3M930.9 407.5L940 377.1M933.4 408.3L942.5 377.9M935.3 408.9L944.4 378.5M930.9 407.5L935.3 408.9M940 377.1L944.4 378.5M940.9 376.5L965.3 352.3M942.4 378L966.8 353.8M943.5 379.1L967.9 354.9M940.9 376.5L943.5 379.1M965.3 352.3L967.9 354.9M966.5 351.6L1003.5 350.3M966.6 353.9L1003.6 352.6M966.7 355.6L1003.7 354.3M966.5 351.6L966.7 355.6M1003.5 350.3L1003.7 354.3M1005 351L1027.7 375.3M1003.4 352.5L1026.1 376.8M1002.2 353.6L1024.9 377.9M1005 351L1002.2 353.6M1027.7 375.3L1024.9 377.9M1028.4 376.3L1039.4 443.2M1026 376.7L1037 443.6M1024.2 376.9L1035.2 443.8M1028.4 376.3L1024.2 376.9M1039.4 443.2L1035.2 443.8" fill="none" stroke="#fbfbfb" stroke-width="1.25"/>
<path d="M165 306L158 289.4L141.9 294.4L130.6 324.4L133.6 359.6L153.9 382.5L183.1 379.4L208.3 355.2L217.3 321.6L210.3 305L194.2 310L182.9 340L185.9 375.2L206.2 398.1L235.4 395L260.6 370.8L269.6 337.2L262.6 320.6L246.5 325.6L235.2 355.6L238.2 390.8L258.5 413.7L287.7 410.6L312.9 386.4L321.9 352.8L314.9 336.2L298.8 341.2L287.5 371.2L290.5 406.4L310.8 429.3L340 426.2L365.2 402L374.2 368.4L367.2 351.8L351.1 356.8L339.8 386.8L342.8 422L363.1 444.9L392.3 441.8L417.5 417.6L426.5 384L419.5 367.4L403.4 372.4L392.1 402.4L395.1 437.6L415.4 460.5L444.6 457.4L469.8 433.2L478.8 399.6L471.8 383L455.7 388L444.4 418L447.4 453.2L467.7 476.1L496.9 473L522.1 448.8L531.1 415.2L524.1 398.6L508 403.6L496.7 433.6L499.7 468.8L520 491.7L549.2 488.6L574.4 464.4L583.4 430.8L576.4 414.2L560.3 419.2L549 449.2L552 484.4L572.3 507.3L601.5 504.2L626.7 480L635.7 446.4L628.7 429.8L612.6 434.8L601.3 464.8L604.3 500L624.6 522.9L653.8 519.8L679 495.6L688 462L681 445.4L664.9 450.4L653.6 480.4L656.6 515.6L676.9 538.5L706.1 535.4L731.3 511.2L740.3 477.6L733.3 461L717.2 466L705.9 496L708.9 531.2L729.2 554.1L758.4 551L783.6 526.8L792.6 493.2L785.6 476.6L769.5 481.6L758.2 511.6L761.2 546.8L781.5 569.7L810.7 566.6L835.9 542.4L844.9 508.8L837.9 492.2L821.8 497.2L810.5 527.2L813.5 562.4L833.8 585.3L863 582.2L888.2 558L897.2 524.4L890.2 507.8L874.1 512.8L862.8 542.8L865.8 578L886.1 600.9L915.3 597.8L940.5 573.6L949.5 540L942.5 523.4L926.4 528.4L915.1 558.4L918.1 593.6L938.4 616.5L967.6 613.4L992.8 589.2L1001.8 555.6L994.8 539L978.7 544L967.4 574L970.4 609.2L990.7 632.1L1019.9 629L1050.6 605.6L1063 573.5L1037.3 443.5" fill="none" stroke="#c4c4bc" stroke-width="4.4" stroke-linejoin="round" stroke-opacity="0.42"/>
<path d="M162.9 306.9L155.9 290.3M165.3 305.9L158.3 289.3M167.1 305.1L160.1 288.5M162.9 306.9L167.1 305.1M155.9 290.3L160.1 288.5M158.7 291.7L142.6 296.7M157.9 289.1L141.8 294.1M157.3 287.1L141.2 292.1M158.7 291.7L157.3 287.1M142.6 296.7L141.2 292.1M144.3 295.3L133 325.3M141.5 294.3L130.2 324.3M139.5 293.5L128.2 323.5M144.3 295.3L139.5 293.5M133 325.3L128.2 323.5M133 324.2L136 359.4M130.2 324.4L133.2 359.6M128.2 324.6L131.2 359.8M133 324.2L128.2 324.6M136 359.4L131.2 359.8M135.1 358.3L155.4 381.2M133.4 359.8L153.7 382.7M132.1 360.9L152.4 383.8M135.1 358.3L132.1 360.9M155.4 381.2L152.4 383.8M153.7 380.6L182.9 377.5M153.9 382.8L183.1 379.7M154.1 384.4L183.3 381.3M153.7 380.6L154.1 384.4M182.9 377.5L183.3 381.3M181.9 378.2L207.1 354M183.3 379.6L208.5 355.4M184.3 380.6L209.5 356.4M181.9 378.2L184.3 380.6M207.1 354L209.5 356.4M206.4 354.7L215.4 321.1M208.6 355.3L217.6 321.7M210.2 355.7L219.2 322.1M206.4 354.7L210.2 355.7M215.4 321.1L219.2 322.1M215.2 322.5L208.2 305.9M217.6 321.5L210.6 304.9M219.4 320.7L212.4 304.1M215.2 322.5L219.4 320.7M208.2 305.9L212.4 304.1M211 307.3L194.9 312.3M210.2 304.7L194.1 309.7M209.6 302.7L193.5 307.7M211 307.3L209.6 302.7M194.9 312.3L193.5 307.7M196.6 310.9L185.3 340.9M193.8 309.9L182.5 339.9M191.8 309.1L180.5 339.1M196.6 310.9L191.8 309.1M185.3 340.9L180.5 339.1M185.3 339.8L188.3 375M182.5 340L185.5 375.2M180.5 340.2L183.5 375.4M185.3 339.8L180.5 340.2M188.3 375L183.5 375.4M187.4 373.9L207.7 396.8M185.7 375.4L206 398.3M184.4 376.5L204.7 399.4M187.4 373.9L184.4 376.5M207.7 396.8L204.7 399.4M206 396.2L235.2 393.1M206.2 398.4L235.4 395.3M206.4 400L235.6 396.9M206 396.2L206.4 400M235.2 393.1L235.6 396.9M234.2 393.8L259.4 369.6M235.6 395.2L260.8 371M236.6 396.2L261.8 372M234.2 393.8L236.6 396.2M259.4 369.6L261.8 372M258.7 370.3L267.7 336.7M260.9 370.9L269.9 337.3M262.5 371.3L271.5 337.7M258.7 370.3L262.5 371.3M267.7 336.7L271.5 337.7M267.5 338.1L260.5 321.5M269.9 337.1L262.9 320.5M271.7 336.3L264.7 319.7M267.5 338.1L271.7 336.3M260.5 321.5L264.7 319.7M263.3 322.9L247.2 327.9M262.5 320.3L246.4 325.3M261.9 318.3L245.8 323.3M263.3 322.9L261.9 318.3M247.2 327.9L245.8 323.3M248.9 326.5L237.6 356.5M246.1 325.5L234.8 355.5M244.1 324.7L232.8 354.7M248.9 326.5L244.1 324.7M237.6 356.5L232.8 354.7M237.6 355.4L240.6 390.6M234.8 355.6L237.8 390.8M232.8 355.8L235.8 391M237.6 355.4L232.8 355.8M240.6 390.6L235.8 391M239.7 389.5L260 412.4M238 391L258.3 413.9M236.7 392.1L257 415M239.7 389.5L236.7 392.1M260 412.4L257 415M258.3 411.8L287.5 408.7M258.5 414L287.7 410.9M258.7 415.6L287.9 412.5M258.3 411.8L258.7 415.6M287.5 408.7L287.9 412.5M286.5 409.4L311.7 385.2M287.9 410.8L313.1 386.6M288.9 411.8L314.1 387.6M286.5 409.4L288.9 411.8M311.7 385.2L314.1 387.6M311 385.9L320 352.3M313.2 386.5L322.2 352.9M314.8 386.9L323.8 353.3M311 385.9L314.8 386.9M320 352.3L323.8 353.3M319.8 353.7L312.8 337.1M322.2 352.7L315.2 336.1M324 351.9L317 335.3M319.8 353.7L324 351.9M312.8 337.1L317 335.3M315.6 338.5L299.5 343.5M314.8 335.9L298.7 340.9M314.2 333.9L298.1 338.9M315.6 338.5L314.2 333.9M299.5 343.5L298.1 338.9M301.2 342.1L289.9 372.1M298.4 341.1L287.1 371.1M296.4 340.3L285.1 370.3M301.2 342.1L296.4 340.3M289.9 372.1L285.1 370.3M289.9 371L292.9 406.2M287.1 371.2L290.1 406.4M285.1 371.4L288.1 406.6M289.9 371L285.1 371.4M292.9 406.2L288.1 406.6M292 405.1L312.3 428M290.3 406.6L310.6 429.5M289 407.7L309.3 430.6M292 405.1L289 407.7M312.3 428L309.3 430.6M310.6 427.4L339.8 424.3M310.8 429.6L340 426.5M311 431.2L340.2 428.1M310.6 427.4L311 431.2M339.8 424.3L340.2 428.1M338.8 425L364 400.8M340.2 426.4L365.4 402.2M341.2 427.4L366.4 403.2M338.8 425L341.2 427.4M364 400.8L366.4 403.2M363.3 401.5L372.3 367.9M365.5 402.1L374.5 368.5M367.1 402.5L376.1 368.9M363.3 401.5L367.1 402.5M372.3 367.9L376.1 368.9M372.1 369.3L365.1 352.7M374.5 368.3L367.5 351.7M376.3 367.5L369.3 350.9M372.1 369.3L376.3 367.5M365.1 352.7L369.3 350.9M367.9 354.1L351.8 359.1M367.1 351.5L351 356.5M366.5 349.5L350.4 354.5M367.9 354.1L366.5 349.5M351.8 359.1L350.4 354.5M353.5 357.7L342.2 387.7M350.7 356.7L339.4 386.7M348.7 355.9L337.4 385.9M353.5 357.7L348.7 355.9M342.2 387.7L337.4 385.9M342.2 386.6L345.2 421.8M339.4 386.8L342.4 422M337.4 387L340.4 422.2M342.2 386.6L337.4 387M345.2 421.8L340.4 422.2M344.3 420.7L364.6 443.6M342.6 422.2L362.9 445.1M341.3 423.3L361.6 446.2M344.3 420.7L341.3 423.3M364.6 443.6L361.6 446.2M362.9 443L392.1 439.9M363.1 445.2L392.3 442.1M363.3 446.8L392.5 443.7M362.9 443L363.3 446.8M392.1 439.9L392.5 443.7M391.1 440.6L416.3 416.4M392.5 442L417.7 417.8M393.5 443L418.7 418.8M391.1 440.6L393.5 443M416.3 416.4L418.7 418.8M415.6 417.1L424.6 383.5M417.8 417.7L426.8 384.1M419.4 418.1L428.4 384.5M415.6 417.1L419.4 418.1M424.6 383.5L428.4 384.5M424.4 384.9L417.4 368.3M426.8 383.9L419.8 367.3M428.6 383.1L421.6 366.5M424.4 384.9L428.6 383.1M417.4 368.3L421.6 366.5M420.2 369.7L404.1 374.7M419.4 367.1L403.3 372.1M418.8 365.1L402.7 370.1M420.2 369.7L418.8 365.1M404.1 374.7L402.7 370.1M405.8 373.3L394.5 403.3M403 372.3L391.7 402.3M401 371.5L389.7 401.5M405.8 373.3L401 371.5M394.5 403.3L389.7 401.5M394.5 402.2L397.5 437.4M391.7 402.4L394.7 437.6M389.7 402.6L392.7 437.8M394.5 402.2L389.7 402.6M397.5 437.4L392.7 437.8M396.6 436.3L416.9 459.2M394.9 437.8L415.2 460.7M393.6 438.9L413.9 461.8M396.6 436.3L393.6 438.9M416.9 459.2L413.9 461.8M415.2 458.6L444.4 455.5M415.4 460.8L444.6 457.7M415.6 462.4L444.8 459.3M415.2 458.6L415.6 462.4M444.4 455.5L444.8 459.3M443.4 456.2L468.6 432M444.8 457.6L470 433.4M445.8 458.6L471 434.4M443.4 456.2L445.8 458.6M468.6 432L471 434.4M467.9 432.7L476.9 399.1M470.1 433.3L479.1 399.7M471.7 433.7L480.7 400.1M467.9 432.7L471.7 433.7M476.9 399.1L480.7 400.1M476.7 400.5L469.7 383.9M479.1 399.5L472.1 382.9M480.9 398.7L473.9 382.1M476.7 400.5L480.9 398.7M469.7 383.9L473.9 382.1M472.5 385.3L456.4 390.3M471.7 382.7L455.6 387.7M471.1 380.7L455 385.7M472.5 385.3L471.1 380.7M456.4 390.3L455 385.7M458.1 388.9L446.8 418.9M455.3 387.9L444 417.9M453.3 387.1L442 417.1M458.1 388.9L453.3 387.1M446.8 418.9L442 417.1M446.8 417.8L449.8 453M444 418L447 453.2M442 418.2L445 453.4M446.8 417.8L442 418.2M449.8 453L445 453.4M448.9 451.9L469.2 474.8M447.2 453.4L467.5 476.3M445.9 454.5L466.2 477.4M448.9 451.9L445.9 454.5M469.2 474.8L466.2 477.4M467.5 474.2L496.7 471.1M467.7 476.4L496.9 473.3M467.9 478L497.1 474.9M467.5 474.2L467.9 478M496.7 471.1L497.1 474.9M495.7 471.8L520.9 447.6M497.1 473.2L522.3 449M498.1 474.2L523.3 450M495.7 471.8L498.1 474.2M520.9 447.6L523.3 450M520.2 448.3L529.2 414.7M522.4 448.9L531.4 415.3M524 449.3L533 415.7M520.2 448.3L524 449.3M529.2 414.7L533 415.7M529 416.1L522 399.5M531.4 415.1L524.4 398.5M533.2 414.3L526.2 397.7M529 416.1L533.2 414.3M522 399.5L526.2 397.7M524.8 400.9L508.7 405.9M524 398.3L507.9 403.3M523.4 396.3L507.3 401.3M524.8 400.9L523.4 396.3M508.7 405.9L507.3 401.3M510.4 404.5L499.1 434.5M507.6 403.5L496.3 433.5M505.6 402.7L494.3 432.7M510.4 404.5L505.6 402.7M499.1 434.5L494.3 432.7M499.1 433.4L502.1 468.6M496.3 433.6L499.3 468.8M494.3 433.8L497.3 469M499.1 433.4L494.3 433.8M502.1 468.6L497.3 469M501.2 467.5L521.5 490.4M499.5 469L519.8 491.9M498.2 470.1L518.5 493M501.2 467.5L498.2 470.1M521.5 490.4L518.5 493M519.8 489.8L549 486.7M520 492L549.2 488.9M520.2 493.6L549.4 490.5M519.8 489.8L520.2 493.6M549 486.7L549.4 490.5M548 487.4L573.2 463.2M549.4 488.8L574.6 464.6M550.4 489.8L575.6 465.6M548 487.4L550.4 489.8M573.2 463.2L575.6 465.6M572.5 463.9L581.5 430.3M574.7 464.5L583.7 430.9M576.3 464.9L585.3 431.3M572.5 463.9L576.3 464.9M581.5 430.3L585.3 431.3M581.3 431.7L574.3 415.1M583.7 430.7L576.7 414.1M585.5 429.9L578.5 413.3M581.3 431.7L585.5 429.9M574.3 415.1L578.5 413.3M577.1 416.5L561 421.5M576.3 413.9L560.2 418.9M575.7 411.9L559.6 416.9M577.1 416.5L575.7 411.9M561 421.5L559.6 416.9M562.7 420.1L551.4 450.1M559.9 419.1L548.6 449.1M557.9 418.3L546.6 448.3M562.7 420.1L557.9 418.3M551.4 450.1L546.6 448.3M551.4 449L554.4 484.2M548.6 449.2L551.6 484.4M546.6 449.4L549.6 484.6M551.4 449L546.6 449.4M554.4 484.2L549.6 484.6M553.5 483.1L573.8 506M551.8 484.6L572.1 507.5M550.5 485.7L570.8 508.6M553.5 483.1L550.5 485.7M573.8 506L570.8 508.6M572.1 505.4L601.3 502.3M572.3 507.6L601.5 504.5M572.5 509.2L601.7 506.1M572.1 505.4L572.5 509.2M601.3 502.3L601.7 506.1M600.3 503L625.5 478.8M601.7 504.4L626.9 480.2M602.7 505.4L627.9 481.2M600.3 503L602.7 505.4M625.5 478.8L627.9 481.2M624.8 479.5L633.8 445.9M627 480.1L636 446.5M628.6 480.5L637.6 446.9M624.8 479.5L628.6 480.5M633.8 445.9L637.6 446.9M633.6 447.3L626.6 430.7M636 446.3L629 429.7M637.8 445.5L630.8 428.9M633.6 447.3L637.8 445.5M626.6 430.7L630.8 428.9M629.4 432.1L613.3 437.1M628.6 429.5L612.5 434.5M628 427.5L611.9 432.5M629.4 432.1L628 427.5M613.3 437.1L611.9 432.5M615 435.7L603.7 465.7M612.2 434.7L600.9 464.7M610.2 433.9L598.9 463.9M615 435.7L610.2 433.9M603.7 465.7L598.9 463.9M603.7 464.6L606.7 499.8M600.9 464.8L603.9 500M598.9 465L601.9 500.2M603.7 464.6L598.9 465M606.7 499.8L601.9 500.2M605.8 498.7L626.1 521.6M604.1 500.2L624.4 523.1M602.8 501.3L623.1 524.2M605.8 498.7L602.8 501.3M626.1 521.6L623.1 524.2M624.4 521L653.6 517.9M624.6 523.2L653.8 520.1M624.8 524.8L654 521.7M624.4 521L624.8 524.8M653.6 517.9L654 521.7M652.6 518.6L677.8 494.4M654 520L679.2 495.8M655 521L680.2 496.8M652.6 518.6L655 521M677.8 494.4L680.2 496.8M677.1 495.1L686.1 461.5M679.3 495.7L688.3 462.1M680.9 496.1L689.9 462.5M677.1 495.1L680.9 496.1M686.1 461.5L689.9 462.5M685.9 462.9L678.9 446.3M688.3 461.9L681.3 445.3M690.1 461.1L683.1 444.5M685.9 462.9L690.1 461.1M678.9 446.3L683.1 444.5M681.7 447.7L665.6 452.7M680.9 445.1L664.8 450.1M680.3 443.1L664.2 448.1M681.7 447.7L680.3 443.1M665.6 452.7L664.2 448.1M667.3 451.3L656 481.3M664.5 450.3L653.2 480.3M662.5 449.5L651.2 479.5M667.3 451.3L662.5 449.5M656 481.3L651.2 479.5M656 480.2L659 515.4M653.2 480.4L656.2 515.6M651.2 480.6L654.2 515.8M656 480.2L651.2 480.6M659 515.4L654.2 515.8M658.1 514.3L678.4 537.2M656.4 515.8L676.7 538.7M655.1 516.9L675.4 539.8M658.1 514.3L655.1 516.9M678.4 537.2L675.4 539.8M676.7 536.6L705.9 533.5M676.9 538.8L706.1 535.7M677.1 540.4L706.3 537.3M676.7 536.6L677.1 540.4M705.9 533.5L706.3 537.3M704.9 534.2L730.1 510M706.3 535.6L731.5 511.4M707.3 536.6L732.5 512.4M704.9 534.2L707.3 536.6M730.1 510L732.5 512.4M729.4 510.7L738.4 477.1M731.6 511.3L740.6 477.7M733.2 511.7L742.2 478.1M729.4 510.7L733.2 511.7M738.4 477.1L742.2 478.1M738.2 478.5L731.2 461.9M740.6 477.5L733.6 460.9M742.4 476.7L735.4 460.1M738.2 478.5L742.4 476.7M731.2 461.9L735.4 460.1M734 463.3L717.9 468.3M733.2 460.7L717.1 465.7M732.6 458.7L716.5 463.7M734 463.3L732.6 458.7M717.9 468.3L716.5 463.7M719.6 466.9L708.3 496.9M716.8 465.9L705.5 495.9M714.8 465.1L703.5 495.1M719.6 466.9L714.8 465.1M708.3 496.9L703.5 495.1M708.3 495.8L711.3 531M705.5 496L708.5 531.2M703.5 496.2L706.5 531.4M708.3 495.8L703.5 496.2M711.3 531L706.5 531.4M710.4 529.9L730.7 552.8M708.7 531.4L729 554.3M707.4 532.5L727.7 555.4M710.4 529.9L707.4 532.5M730.7 552.8L727.7 555.4M729 552.2L758.2 549.1M729.2 554.4L758.4 551.3M729.4 556L758.6 552.9M729 552.2L729.4 556M758.2 549.1L758.6 552.9M757.2 549.8L782.4 525.6M758.6 551.2L783.8 527M759.6 552.2L784.8 528M757.2 549.8L759.6 552.2M782.4 525.6L784.8 528M781.7 526.3L790.7 492.7M783.9 526.9L792.9 493.3M785.5 527.3L794.5 493.7M781.7 526.3L785.5 527.3M790.7 492.7L794.5 493.7M790.5 494.1L783.5 477.5M792.9 493.1L785.9 476.5M794.7 492.3L787.7 475.7M790.5 494.1L794.7 492.3M783.5 477.5L787.7 475.7M786.3 478.9L770.2 483.9M785.5 476.3L769.4 481.3M784.9 474.3L768.8 479.3M786.3 478.9L784.9 474.3M770.2 483.9L768.8 479.3M771.9 482.5L760.6 512.5M769.1 481.5L757.8 511.5M767.1 480.7L755.8 510.7M771.9 482.5L767.1 480.7M760.6 512.5L755.8 510.7M760.6 511.4L763.6 546.6M757.8 511.6L760.8 546.8M755.8 511.8L758.8 547M760.6 511.4L755.8 511.8M763.6 546.6L758.8 547M762.7 545.5L783 568.4M761 547L781.3 569.9M759.7 548.1L780 571M762.7 545.5L759.7 548.1M783 568.4L780 571M781.3 567.8L810.5 564.7M781.5 570L810.7 566.9M781.7 571.6L810.9 568.5M781.3 567.8L781.7 571.6M810.5 564.7L810.9 568.5M809.5 565.4L834.7 541.2M810.9 566.8L836.1 542.6M811.9 567.8L837.1 543.6M809.5 565.4L811.9 567.8M834.7 541.2L837.1 543.6M834 541.9L843 508.3M836.2 542.5L845.2 508.9M837.8 542.9L846.8 509.3M834 541.9L837.8 542.9M843 508.3L846.8 509.3M842.8 509.7L835.8 493.1M845.2 508.7L838.2 492.1M847 507.9L840 491.3M842.8 509.7L847 507.9M835.8 493.1L840 491.3M838.6 494.5L822.5 499.5M837.8 491.9L821.7 496.9M837.2 489.9L821.1 494.9M838.6 494.5L837.2 489.9M822.5 499.5L821.1 494.9M824.2 498.1L812.9 528.1M821.4 497.1L810.1 527.1M819.4 496.3L808.1 526.3M824.2 498.1L819.4 496.3M812.9 528.1L808.1 526.3M812.9 527L815.9 562.2M810.1 527.2L813.1 562.4M808.1 527.4L811.1 562.6M812.9 527L808.1 527.4M815.9 562.2L811.1 562.6M815 561.1L835.3 584M813.3 562.6L833.6 585.5M812 563.7L832.3 586.6M815 561.1L812 563.7M835.3 584L832.3 586.6M833.6 583.4L862.8 580.3M833.8 585.6L863 582.5M834 587.2L863.2 584.1M833.6 583.4L834 587.2M862.8 580.3L863.2 584.1M861.8 581L887 556.8M863.2 582.4L888.4 558.2M864.2 583.4L889.4 559.2M861.8 581L864.2 583.4M887 556.8L889.4 559.2M886.3 557.5L895.3 523.9M888.5 558.1L897.5 524.5M890.1 558.5L899.1 524.9M886.3 557.5L890.1 558.5M895.3 523.9L899.1 524.9M895.1 525.3L888.1 508.7M897.5 524.3L890.5 507.7M899.3 523.5L892.3 506.9M895.1 525.3L899.3 523.5M888.1 508.7L892.3 506.9M890.9 510.1L874.8 515.1M890.1 507.5L874 512.5M889.5 505.5L873.4 510.5M890.9 510.1L889.5 505.5M874.8 515.1L873.4 510.5M876.5 513.7L865.2 543.7M873.7 512.7L862.4 542.7M871.7 511.9L860.4 541.9M876.5 513.7L871.7 511.9M865.2 543.7L860.4 541.9M865.2 542.6L868.2 577.8M862.4 542.8L865.4 578M860.4 543L863.4 578.2M865.2 542.6L860.4 543M868.2 577.8L863.4 578.2M867.3 576.7L887.6 599.6M865.6 578.2L885.9 601.1M864.3 579.3L884.6 602.2M867.3 576.7L864.3 579.3M887.6 599.6L884.6 602.2M885.9 599L915.1 595.9M886.1 601.2L915.3 598.1M886.3 602.8L915.5 599.7M885.9 599L886.3 602.8M915.1 595.9L915.5 599.7M914.1 596.6L939.3 572.4M915.5 598L940.7 573.8M916.5 599L941.7 574.8M914.1 596.6L916.5 599M939.3 572.4L941.7 574.8M938.6 573.1L947.6 539.5M940.8 573.7L949.8 540.1M942.4 574.1L951.4 540.5M938.6 573.1L942.4 574.1M947.6 539.5L951.4 540.5M947.4 540.9L940.4 524.3M949.8 539.9L942.8 523.3M951.6 539.1L944.6 522.5M947.4 540.9L951.6 539.1M940.4 524.3L944.6 522.5M943.2 525.7L927.1 530.7M942.4 523.1L926.3 528.1M941.8 521.1L925.7 526.1M943.2 525.7L941.8 521.1M927.1 530.7L925.7 526.1M928.8 529.3L917.5 559.3M926 528.3L914.7 558.3M924 527.5L912.7 557.5M928.8 529.3L924 527.5M917.5 559.3L912.7 557.5M917.5 558.2L920.5 593.4M914.7 558.4L917.7 593.6M912.7 558.6L915.7 593.8M917.5 558.2L912.7 558.6M920.5 593.4L915.7 593.8M919.6 592.3L939.9 615.2M917.9 593.8L938.2 616.7M916.6 594.9L936.9 617.8M919.6 592.3L916.6 594.9M939.9 615.2L936.9 617.8M938.2 614.6L967.4 611.5M938.4 616.8L967.6 613.7M938.6 618.4L967.8 615.3M938.2 614.6L938.6 618.4M967.4 611.5L967.8 615.3M966.4 612.2L991.6 588M967.8 613.6L993 589.4M968.8 614.6L994 590.4M966.4 612.2L968.8 614.6M991.6 588L994 590.4M990.9 588.7L999.9 555.1M993.1 589.3L1002.1 555.7M994.7 589.7L1003.7 556.1M990.9 588.7L994.7 589.7M999.9 555.1L1003.7 556.1M999.7 556.5L992.7 539.9M1002.1 555.5L995.1 538.9M1003.9 554.7L996.9 538.1M999.7 556.5L1003.9 554.7M992.7 539.9L996.9 538.1M995.5 541.3L979.4 546.3M994.7 538.7L978.6 543.7M994.1 536.7L978 541.7M995.5 541.3L994.1 536.7M979.4 546.3L978 541.7M981.1 544.9L969.8 574.9M978.3 543.9L967 573.9M976.3 543.1L965 573.1M981.1 544.9L976.3 543.1M969.8 574.9L965 573.1M969.8 573.8L972.8 609M967 574L970 609.2M965 574.2L968 609.4M969.8 573.8L965 574.2M972.8 609L968 609.4M971.9 607.9L992.2 630.8M970.2 609.4L990.5 632.3M968.9 610.5L989.2 633.4M971.9 607.9L968.9 610.5M992.2 630.8L989.2 633.4M990.5 630.2L1019.7 627.1M990.7 632.4L1019.9 629.3M990.9 634L1020.1 630.9M990.5 630.2L990.9 634M1019.7 627.1L1020.1 630.9M1018.9 627.6L1049.6 604.2M1020.1 629.2L1050.8 605.8M1020.9 630.4L1051.6 607M1018.9 627.6L1020.9 630.4M1049.6 604.2L1051.6 607M1048.7 604.9L1061.1 572.8M1050.9 605.7L1063.3 573.6M1052.5 606.3L1064.9 574.2M1048.7 604.9L1052.5 606.3M1061.1 572.8L1064.9 574.2M1060.7 573.9L1035 443.9M1063.3 573.4L1037.6 443.4M1065.3 573.1L1039.6 443.1M1060.7 573.9L1065.3 573.1M1035 443.9L1039.6 443.1" fill="none" stroke="#fbfbfb" stroke-width="1.25"/><path d="M1031 397.5L1039 442.5" stroke="#7d8298" stroke-width="2.6" fill="none"/>
<path d="M1032.4 397.2L1040.4 442.2" stroke="#dcdde6" stroke-width="0.8" fill="none"/>
<path d="M1038.2 414.6l3.600 1.200l1.400 4.200l-2.400 4.800l-1.800-2.600z" fill="#7a3a1a" stroke="#f3dcb8" stroke-width="1"/><g fill="none" stroke-width="1.5" stroke-linecap="round">
<path d="M158 705.4L152.4 669.5M150 673.5L152.4 669.5L155.2 672.6M155.8 640.6L142.8 671.8M139.4 653.2L159.2 658.8" stroke="#ff8585"/>
<path d="M158 705.4L125.8 696.6M131.6 695.2L125.8 696.6L129.8 700.6M113.9 684.2L97.6 696.4L130.4 688.9L113.9 700.8" stroke="#8585ff"/>
<path d="M158 705.4L130.8 728M136.6 727.4L130.8 728L132.4 722.4M113.9 752.6L119 734.6L109.8 730.4M119 734.6L128.2 729" stroke="#85ff85"/>
</g></svg></div>
<div class="fld" style="left:107px;width:205px;padding-left:2px;letter-spacing:0.1px">Angles : (-44.8056, 30.5505, 100.593)</div>
<div class="fld" style="left:316px;width:165px;padding-left:1px;letter-spacing:0.1px">Scale : (100%, 100%, 100%)</div>
<div class="fld" style="left:484px;width:57px;padding-left:1px;letter-spacing:0.2px">66.6667%</div>
<svg class="abs" style="left:3px;top:818px" width="9" height="9" viewBox="0 0 9 9"><path d="M1.5 1.5L6.5 6.5M6.5 1.5L1.5 6.5" stroke="#000" stroke-width="1.6"/></svg>
<div class="info"><span>Information</span></div>
<div class="msgf"></div>
<div class="msg"><div style="top:3px">Geometry file <b>&quot;C:\Zeland\ie3d\practice\Helix2x17_22.geo&quot;</b> loaded</div><div style="top:16px">S-parameters related views are closed.</div><div style="top:29px">S-parameters related views are automatically opened.</div><div style="top:42px">Geometry file is closed.</div><div style="top:55px">Geometry file <i>&quot;C:\Zeland\ie3d\practice\Helix2x17_22_optimmm.geo&quot;</i> loaded</div></div>
<div class="tab sel" style="left:18px;width:55px">Message</div>
<div class="tab" style="left:75px;width:53px">Geometry</div>
<div class="tab" style="left:131px;width:76px">Metallic Types</div>
<div class="tab" style="left:211px;width:59px">Substrates</div>
<div class="tab" style="left:273px;width:85px">Finite Dielectrics</div>
<div class="tab" style="left:362px;width:52px">Task List</div>
<div class="hl" style="top:949px"></div>
<div class="sbt">For Help, press F1</div>
<div class="sb" style="left:697px;width:36px">mm</div>
<div class="sb" style="left:735px;width:60px;padding-left:2px;letter-spacing:-0.05px">0.360682%</div>
<div class="sb" style="left:798px;width:75px;letter-spacing:-0.85px">R2_COPYPEN</div>
<div class="sb" style="left:876px;width:127px">No Plane Wave Defined</div>
<div class="sb" style="left:1005px;width:255px"></div>
<svg class="abs" style="left:1266px;top:955px" width="13" height="13" viewBox="0 0 13 13"><path d="M12 1L1 12M12 5L5 12M12 9L9 12" stroke="#aca899" stroke-width="1.3"/><path d="M12 2L2 12M12 6L6 12M12 10L10 12" stroke="#fff" stroke-width="0.8"/></svg>
</body></html>
